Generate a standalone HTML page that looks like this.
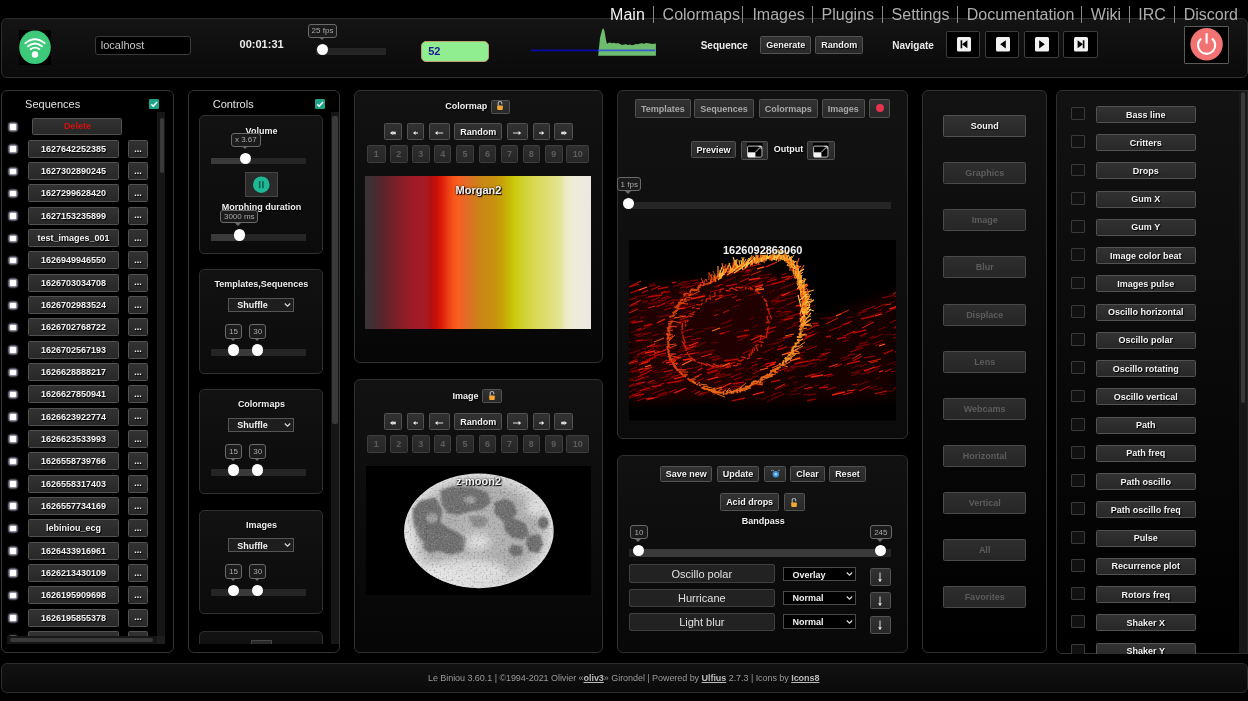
<!DOCTYPE html><html><head><meta charset="utf-8"><style>
*{margin:0;padding:0;box-sizing:border-box}
html,body{width:1248px;height:701px;background:#000;overflow:hidden;font-family:"Liberation Sans",sans-serif;color:#eee}
body{will-change:transform}
div,span{position:absolute}
.panel{border:1px solid #343434;border-radius:6px}
.btn{background:linear-gradient(#323232,#282828);border:1px solid #525252;border-radius:1.5px;color:#f2f2f2;font-weight:bold;font-size:9px;text-align:center;text-shadow:1px 1px 1px #000;white-space:nowrap;overflow:hidden}
.bt{text-align:center;white-space:nowrap;font-weight:bold;color:#f2f2f2;text-shadow:1px 1px 1px #000}
.bt.dis{color:#5c5c5c;text-shadow:none}
.bt.gry{color:#a8a8a8;text-shadow:none}
.tt{text-align:center;white-space:nowrap;font-size:8px;line-height:8px;color:#a8a8a8}
.dis{color:#6c6c6c;text-shadow:none}
.gry{color:#a8a8a8}
.tip{background:#1b1b1b;border:1px solid #6a6a6a;border-radius:3px;color:#a0a0a0;font-size:9px;text-align:center;white-space:nowrap}
.tip span{line-height:9px}
.tiparr{width:0;height:0;border-left:3.5px solid transparent;border-right:3.5px solid transparent;border-top:3.5px solid #6a6a6a}
.hdl{background:#fff;border-radius:50%}
.track{background:#252525}
.trackfill{background:#3a3a3a}
.card{border:1px solid #2f2f2f;border-radius:5px;background:linear-gradient(#121212,#0b0b0b)}
.sel{border:1px solid #555;background:#1e1e1e;color:#f0f0f0;font-weight:bold;white-space:nowrap}
.cbw{background:#fff;border-radius:1px;box-shadow:0 0 1.6px 1.6px #a4a4bc}
.cbd{background:#111;border:1px solid #3a3a3a;border-radius:1px}
</style></head><body>
<div class="panel" style="left:1px;top:17.5px;width:1247px;height:60px;background:linear-gradient(#141414,#0a0a0a);border-color:#2e2e2e;border-right-color:#2e2e2e;"></div>
<span style="left:610.1px;top:7px;font-size:16px;line-height:16px;font-weight:normal;color:#f2f2f2;white-space:nowrap;">Main</span>
<div class="" style="left:652.5px;top:6px;width:1px;height:17px;background:#8a8a8a;"></div>
<span style="left:662.6px;top:7px;font-size:16px;line-height:16px;font-weight:normal;color:#adadad;white-space:nowrap;">Colormaps</span>
<div class="" style="left:742.3px;top:6px;width:1px;height:17px;background:#8a8a8a;"></div>
<span style="left:752.4px;top:7px;font-size:16px;line-height:16px;font-weight:normal;color:#adadad;white-space:nowrap;">Images</span>
<div class="" style="left:812.3px;top:6px;width:1px;height:17px;background:#8a8a8a;"></div>
<span style="left:821.6px;top:7px;font-size:16px;line-height:16px;font-weight:normal;color:#adadad;white-space:nowrap;">Plugins</span>
<div class="" style="left:882.3px;top:6px;width:1px;height:17px;background:#8a8a8a;"></div>
<span style="left:891.6px;top:7px;font-size:16px;line-height:16px;font-weight:normal;color:#adadad;white-space:nowrap;">Settings</span>
<div class="" style="left:956.7px;top:6px;width:1px;height:17px;background:#8a8a8a;"></div>
<span style="left:966.7px;top:7px;font-size:16px;line-height:16px;font-weight:normal;color:#adadad;white-space:nowrap;">Documentation</span>
<div class="" style="left:1081.3px;top:6px;width:1px;height:17px;background:#8a8a8a;"></div>
<span style="left:1090.8px;top:7px;font-size:16px;line-height:16px;font-weight:normal;color:#adadad;white-space:nowrap;">Wiki</span>
<div class="" style="left:1128.7px;top:6px;width:1px;height:17px;background:#8a8a8a;"></div>
<span style="left:1138.2px;top:7px;font-size:16px;line-height:16px;font-weight:normal;color:#adadad;white-space:nowrap;">IRC</span>
<div class="" style="left:1174.2px;top:6px;width:1px;height:17px;background:#8a8a8a;"></div>
<span style="left:1183.7px;top:7px;font-size:16px;line-height:16px;font-weight:normal;color:#adadad;white-space:nowrap;">Discord</span>
<div class="" style="left:18.6px;top:30px;width:32.4px;height:34.6px;background:#000;"></div>
<svg style="position:absolute;left:18px;top:30px" width="34" height="35" viewBox="0 0 34 35">
<ellipse cx="17" cy="17.3" rx="15.8" ry="16.8" fill="#3dc97a"/>
<path d="M7.3 13.2 Q17 5.2 26.7 13.2" stroke="#fff" stroke-width="1.9" fill="none" stroke-linecap="round"/>
<path d="M10 16.3 Q17 10.8 24 16.3" stroke="#fff" stroke-width="1.9" fill="none" stroke-linecap="round"/>
<path d="M12.6 19.3 Q17 16 21.4 19.3" stroke="#fff" stroke-width="1.9" fill="none" stroke-linecap="round"/>
<circle cx="17" cy="24.5" r="3.2" fill="#fff"/>
</svg>
<div class="" style="left:94.5px;top:35.5px;width:96.5px;height:19px;background:#000;border:1px solid #3a3a3a;border-radius:3px;"></div>
<span style="left:100.8px;top:40px;font-size:11px;line-height:11px;font-weight:normal;color:#c8c8c8;white-space:nowrap;">localhost</span>
<span style="left:239.6px;top:39px;font-size:11px;line-height:11px;font-weight:bold;color:#ececec;white-space:nowrap;">00:01:31</span>
<div class="tip" style="left:308px;top:24px;width:29px;height:14px;"></div>
<span class="tt" style="left:308px;width:29px;top:27px;">25 fps</span>
<div class="tiparr" style="left:318.9px;top:37.4px;"></div>
<div class="track" style="left:316px;top:48px;width:70px;height:7px;"></div>
<div class="hdl" style="left:316.7px;top:43.6px;width:11.4px;height:11.4px;"></div>
<div class="" style="left:421px;top:41px;width:68px;height:21px;background:#90ee90;border:1px solid #c0a070;border-radius:5px;"></div>
<span style="left:428.2px;top:46px;font-size:11px;line-height:11px;font-weight:bold;color:#1a1a9c;white-space:nowrap;">52</span>
<svg style="position:absolute;left:520px;top:18px" width="160" height="60" viewBox="0 0 160 60">
<path d="M78.2 37.8 L80 20 L82 12 L83.3 10.2 L84.5 13 L86 22 L87 26 L88 25 L90 24.5 L92 25.2 L94 24.8 L96 25.5 L98 25 L100 26 L102 27 L104 26.5 L106 26.2 L108 27 L110 26.5 L112 27.2 L114 26.8 L116 26 L118 26.3 L120 25.5 L122 25.2 L124 25.8 L126 25 L128 25.2 L130 25.6 L132 26 L134 25.8 L135.9 25.4 L135.9 37.8 Z" fill="#6ebd6e"/>
<line x1="10.9" y1="32.4" x2="78.2" y2="32.4" stroke="#0a0ab0" stroke-width="1.6"/>
<line x1="78.2" y1="32.4" x2="135.3" y2="32.4" stroke="#3a5ad0" stroke-width="1.6"/>
</svg>
<span style="left:700.7px;top:41px;font-size:10px;line-height:10px;font-weight:bold;color:#eaeaea;white-space:nowrap;">Sequence</span>
<div class="btn " style="left:760.3px;top:36px;width:50.7px;height:17.8px;"></div>
<span class="bt " style="left:760.3px;width:50.7px;top:41px;font-size:9px;line-height:9px;">Generate</span>
<div class="btn " style="left:815.2px;top:36px;width:48.1px;height:17.8px;"></div>
<span class="bt " style="left:815.2px;width:48.1px;top:41px;font-size:9px;line-height:9px;">Random</span>
<span style="left:892.2px;top:41px;font-size:10px;line-height:10px;font-weight:bold;color:#eaeaea;white-space:nowrap;">Navigate</span>
<div class="" style="left:945.6px;top:31.4px;width:34.5px;height:26.3px;background:#000;border:1px solid #3c3c3c;border-radius:2px;"></div>
<svg style="position:absolute;left:956.5px;top:37.4px" width="14" height="15" viewBox="0 0 14 15"><rect x="0" y="0" width="14" height="14.5" rx="1.5" fill="#f2f2f2"/><rect x="3.6" y="3.3" width="1.6" height="8" fill="#000"/><path d="M10.4 3.3 L5 7.3 L10.4 11.3 Z" fill="#000"/></svg>
<div class="" style="left:984.9px;top:31.4px;width:34.5px;height:26.3px;background:#000;border:1px solid #3c3c3c;border-radius:2px;"></div>
<svg style="position:absolute;left:995.8px;top:37.4px" width="14" height="15" viewBox="0 0 14 15"><rect x="0" y="0" width="14" height="14.5" rx="1.5" fill="#f2f2f2"/><path d="M9.8 3.2 L4.2 7.3 L9.8 11.4 Z" fill="#000"/></svg>
<div class="" style="left:1024.1px;top:31.4px;width:34.5px;height:26.3px;background:#000;border:1px solid #3c3c3c;border-radius:2px;"></div>
<svg style="position:absolute;left:1035px;top:37.4px" width="14" height="15" viewBox="0 0 14 15"><rect x="0" y="0" width="14" height="14.5" rx="1.5" fill="#f2f2f2"/><path d="M4.2 3.2 L9.8 7.3 L4.2 11.4 Z" fill="#000"/></svg>
<div class="" style="left:1063.3px;top:31.4px;width:34.5px;height:26.3px;background:#000;border:1px solid #3c3c3c;border-radius:2px;"></div>
<svg style="position:absolute;left:1074.2px;top:37.4px" width="14" height="15" viewBox="0 0 14 15"><rect x="0" y="0" width="14" height="14.5" rx="1.5" fill="#f2f2f2"/><rect x="8.8" y="3.3" width="1.6" height="8" fill="#000"/><path d="M3.6 3.3 L9 7.3 L3.6 11.3 Z" fill="#000"/></svg>
<div class="" style="left:1183.5px;top:25.9px;width:45.5px;height:37.8px;background:#000;border:1px solid #5a5a5a;border-radius:1px;"></div>
<svg style="position:absolute;left:1188px;top:26px" width="38" height="38" viewBox="0 0 38 38">
<circle cx="18.6" cy="18.2" r="16.2" fill="#f37373"/>
<path d="M13.2 12.6 A8.6 8.6 0 1 0 24 12.6" stroke="#fff" stroke-width="2.1" fill="none" stroke-linecap="butt"/>
<line x1="18.6" y1="7.2" x2="18.6" y2="17.6" stroke="#fff" stroke-width="2.1"/>
</svg>
<div class="panel" style="left:1px;top:89.6px;width:173px;height:563.7px;background:#000;"></div>
<span style="left:25.1px;top:99px;font-size:11px;line-height:11px;font-weight:normal;color:#e2e2e2;white-space:nowrap;">Sequences</span>
<svg style="position:absolute;left:149.1px;top:98.7px" width="10" height="10" viewBox="0 0 10 10">
<rect x="0" y="0" width="10" height="10" rx="1.2" fill="#1da484"/>
<path d="M2.2 5.2 L4.2 7.2 L8 3" stroke="#fff" stroke-width="1.5" fill="none"/></svg>
<div style="left:6px;top:112px;width:150px;height:524px;overflow:hidden;"><div style="left:-6px;top:-112px;width:1248px;height:701px;">
<div class="cbw" style="left:10px;top:123.8px;width:5.8px;height:5.8px;"></div>
<div class="btn " style="left:32.3px;top:118px;width:90.2px;height:16.8px;"></div>
<span class="bt " style="left:32.3px;width:90.2px;top:122px;font-size:9px;line-height:9px;color:#d41010;text-shadow:none;">Delete</span>
<div class="cbw" style="left:10px;top:146.2px;width:5.6px;height:5.6px;"></div>
<div class="btn " style="left:28.3px;top:139.8px;width:90.4px;height:17.8px;"></div>
<span class="bt " style="left:28.3px;width:90.4px;top:145px;font-size:9px;line-height:9px;">1627642252385</span>
<div class="btn " style="left:128.2px;top:139.8px;width:19.7px;height:17.8px;"></div>
<span class="bt " style="left:128.2px;width:19.7px;top:145px;font-size:9px;line-height:9px;">...</span>
<div class="cbw" style="left:10px;top:168.53px;width:5.6px;height:5.6px;"></div>
<div class="btn " style="left:28.3px;top:162.13px;width:90.4px;height:17.8px;"></div>
<span class="bt " style="left:28.3px;width:90.4px;top:167px;font-size:9px;line-height:9px;">1627302890245</span>
<div class="btn " style="left:128.2px;top:162.13px;width:19.7px;height:17.8px;"></div>
<span class="bt " style="left:128.2px;width:19.7px;top:167px;font-size:9px;line-height:9px;">...</span>
<div class="cbw" style="left:10px;top:190.86px;width:5.6px;height:5.6px;"></div>
<div class="btn " style="left:28.3px;top:184.46px;width:90.4px;height:17.8px;"></div>
<span class="bt " style="left:28.3px;width:90.4px;top:189px;font-size:9px;line-height:9px;">1627299628420</span>
<div class="btn " style="left:128.2px;top:184.46px;width:19.7px;height:17.8px;"></div>
<span class="bt " style="left:128.2px;width:19.7px;top:189px;font-size:9px;line-height:9px;">...</span>
<div class="cbw" style="left:10px;top:213.19px;width:5.6px;height:5.6px;"></div>
<div class="btn " style="left:28.3px;top:206.79px;width:90.4px;height:17.8px;"></div>
<span class="bt " style="left:28.3px;width:90.4px;top:212px;font-size:9px;line-height:9px;">1627153235899</span>
<div class="btn " style="left:128.2px;top:206.79px;width:19.7px;height:17.8px;"></div>
<span class="bt " style="left:128.2px;width:19.7px;top:211px;font-size:9px;line-height:9px;">...</span>
<div class="cbw" style="left:10px;top:235.52px;width:5.6px;height:5.6px;"></div>
<div class="btn " style="left:28.3px;top:229.12px;width:90.4px;height:17.8px;"></div>
<span class="bt " style="left:28.3px;width:90.4px;top:234px;font-size:9px;line-height:9px;">test_images_001</span>
<div class="btn " style="left:128.2px;top:229.12px;width:19.7px;height:17.8px;"></div>
<span class="bt " style="left:128.2px;width:19.7px;top:234px;font-size:9px;line-height:9px;">...</span>
<div class="cbw" style="left:10px;top:257.85px;width:5.6px;height:5.6px;"></div>
<div class="btn " style="left:28.3px;top:251.45px;width:90.4px;height:17.8px;"></div>
<span class="bt " style="left:28.3px;width:90.4px;top:256px;font-size:9px;line-height:9px;">1626949946550</span>
<div class="btn " style="left:128.2px;top:251.45px;width:19.7px;height:17.8px;"></div>
<span class="bt " style="left:128.2px;width:19.7px;top:256px;font-size:9px;line-height:9px;">...</span>
<div class="cbw" style="left:10px;top:280.18px;width:5.6px;height:5.6px;"></div>
<div class="btn " style="left:28.3px;top:273.78px;width:90.4px;height:17.8px;"></div>
<span class="bt " style="left:28.3px;width:90.4px;top:279px;font-size:9px;line-height:9px;">1626703034708</span>
<div class="btn " style="left:128.2px;top:273.78px;width:19.7px;height:17.8px;"></div>
<span class="bt " style="left:128.2px;width:19.7px;top:278px;font-size:9px;line-height:9px;">...</span>
<div class="cbw" style="left:10px;top:302.51px;width:5.6px;height:5.6px;"></div>
<div class="btn " style="left:28.3px;top:296.11px;width:90.4px;height:17.8px;"></div>
<span class="bt " style="left:28.3px;width:90.4px;top:301px;font-size:9px;line-height:9px;">1626702983524</span>
<div class="btn " style="left:128.2px;top:296.11px;width:19.7px;height:17.8px;"></div>
<span class="bt " style="left:128.2px;width:19.7px;top:301px;font-size:9px;line-height:9px;">...</span>
<div class="cbw" style="left:10px;top:324.84px;width:5.6px;height:5.6px;"></div>
<div class="btn " style="left:28.3px;top:318.44px;width:90.4px;height:17.8px;"></div>
<span class="bt " style="left:28.3px;width:90.4px;top:323px;font-size:9px;line-height:9px;">1626702768722</span>
<div class="btn " style="left:128.2px;top:318.44px;width:19.7px;height:17.8px;"></div>
<span class="bt " style="left:128.2px;width:19.7px;top:323px;font-size:9px;line-height:9px;">...</span>
<div class="cbw" style="left:10px;top:347.17px;width:5.6px;height:5.6px;"></div>
<div class="btn " style="left:28.3px;top:340.77px;width:90.4px;height:17.8px;"></div>
<span class="bt " style="left:28.3px;width:90.4px;top:346px;font-size:9px;line-height:9px;">1626702567193</span>
<div class="btn " style="left:128.2px;top:340.77px;width:19.7px;height:17.8px;"></div>
<span class="bt " style="left:128.2px;width:19.7px;top:345px;font-size:9px;line-height:9px;">...</span>
<div class="cbw" style="left:10px;top:369.5px;width:5.6px;height:5.6px;"></div>
<div class="btn " style="left:28.3px;top:363.1px;width:90.4px;height:17.8px;"></div>
<span class="bt " style="left:28.3px;width:90.4px;top:368px;font-size:9px;line-height:9px;">1626628888217</span>
<div class="btn " style="left:128.2px;top:363.1px;width:19.7px;height:17.8px;"></div>
<span class="bt " style="left:128.2px;width:19.7px;top:368px;font-size:9px;line-height:9px;">...</span>
<div class="cbw" style="left:10px;top:391.83px;width:5.6px;height:5.6px;"></div>
<div class="btn " style="left:28.3px;top:385.43px;width:90.4px;height:17.8px;"></div>
<span class="bt " style="left:28.3px;width:90.4px;top:390px;font-size:9px;line-height:9px;">1626627850941</span>
<div class="btn " style="left:128.2px;top:385.43px;width:19.7px;height:17.8px;"></div>
<span class="bt " style="left:128.2px;width:19.7px;top:390px;font-size:9px;line-height:9px;">...</span>
<div class="cbw" style="left:10px;top:414.16px;width:5.6px;height:5.6px;"></div>
<div class="btn " style="left:28.3px;top:407.76px;width:90.4px;height:17.8px;"></div>
<span class="bt " style="left:28.3px;width:90.4px;top:413px;font-size:9px;line-height:9px;">1626623922774</span>
<div class="btn " style="left:128.2px;top:407.76px;width:19.7px;height:17.8px;"></div>
<span class="bt " style="left:128.2px;width:19.7px;top:412px;font-size:9px;line-height:9px;">...</span>
<div class="cbw" style="left:10px;top:436.49px;width:5.6px;height:5.6px;"></div>
<div class="btn " style="left:28.3px;top:430.09px;width:90.4px;height:17.8px;"></div>
<span class="bt " style="left:28.3px;width:90.4px;top:435px;font-size:9px;line-height:9px;">1626623533993</span>
<div class="btn " style="left:128.2px;top:430.09px;width:19.7px;height:17.8px;"></div>
<span class="bt " style="left:128.2px;width:19.7px;top:435px;font-size:9px;line-height:9px;">...</span>
<div class="cbw" style="left:10px;top:458.82px;width:5.6px;height:5.6px;"></div>
<div class="btn " style="left:28.3px;top:452.42px;width:90.4px;height:17.8px;"></div>
<span class="bt " style="left:28.3px;width:90.4px;top:457px;font-size:9px;line-height:9px;">1626558739766</span>
<div class="btn " style="left:128.2px;top:452.42px;width:19.7px;height:17.8px;"></div>
<span class="bt " style="left:128.2px;width:19.7px;top:457px;font-size:9px;line-height:9px;">...</span>
<div class="cbw" style="left:10px;top:481.15px;width:5.6px;height:5.6px;"></div>
<div class="btn " style="left:28.3px;top:474.75px;width:90.4px;height:17.8px;"></div>
<span class="bt " style="left:28.3px;width:90.4px;top:480px;font-size:9px;line-height:9px;">1626558317403</span>
<div class="btn " style="left:128.2px;top:474.75px;width:19.7px;height:17.8px;"></div>
<span class="bt " style="left:128.2px;width:19.7px;top:479px;font-size:9px;line-height:9px;">...</span>
<div class="cbw" style="left:10px;top:503.48px;width:5.6px;height:5.6px;"></div>
<div class="btn " style="left:28.3px;top:497.08px;width:90.4px;height:17.8px;"></div>
<span class="bt " style="left:28.3px;width:90.4px;top:502px;font-size:9px;line-height:9px;">1626557734169</span>
<div class="btn " style="left:128.2px;top:497.08px;width:19.7px;height:17.8px;"></div>
<span class="bt " style="left:128.2px;width:19.7px;top:502px;font-size:9px;line-height:9px;">...</span>
<div class="cbw" style="left:10px;top:525.81px;width:5.6px;height:5.6px;"></div>
<div class="btn " style="left:28.3px;top:519.41px;width:90.4px;height:17.8px;"></div>
<span class="bt " style="left:28.3px;width:90.4px;top:524px;font-size:9px;line-height:9px;">lebiniou_ecg</span>
<div class="btn " style="left:128.2px;top:519.41px;width:19.7px;height:17.8px;"></div>
<span class="bt " style="left:128.2px;width:19.7px;top:524px;font-size:9px;line-height:9px;">...</span>
<div class="cbw" style="left:10px;top:548.14px;width:5.6px;height:5.6px;"></div>
<div class="btn " style="left:28.3px;top:541.74px;width:90.4px;height:17.8px;"></div>
<span class="bt " style="left:28.3px;width:90.4px;top:547px;font-size:9px;line-height:9px;">1626433916961</span>
<div class="btn " style="left:128.2px;top:541.74px;width:19.7px;height:17.8px;"></div>
<span class="bt " style="left:128.2px;width:19.7px;top:546px;font-size:9px;line-height:9px;">...</span>
<div class="cbw" style="left:10px;top:570.47px;width:5.6px;height:5.6px;"></div>
<div class="btn " style="left:28.3px;top:564.07px;width:90.4px;height:17.8px;"></div>
<span class="bt " style="left:28.3px;width:90.4px;top:569px;font-size:9px;line-height:9px;">1626213430109</span>
<div class="btn " style="left:128.2px;top:564.07px;width:19.7px;height:17.8px;"></div>
<span class="bt " style="left:128.2px;width:19.7px;top:569px;font-size:9px;line-height:9px;">...</span>
<div class="cbw" style="left:10px;top:592.8px;width:5.6px;height:5.6px;"></div>
<div class="btn " style="left:28.3px;top:586.4px;width:90.4px;height:17.8px;"></div>
<span class="bt " style="left:28.3px;width:90.4px;top:591px;font-size:9px;line-height:9px;">1626195909698</span>
<div class="btn " style="left:128.2px;top:586.4px;width:19.7px;height:17.8px;"></div>
<span class="bt " style="left:128.2px;width:19.7px;top:591px;font-size:9px;line-height:9px;">...</span>
<div class="cbw" style="left:10px;top:615.13px;width:5.6px;height:5.6px;"></div>
<div class="btn " style="left:28.3px;top:608.73px;width:90.4px;height:17.8px;"></div>
<span class="bt " style="left:28.3px;width:90.4px;top:614px;font-size:9px;line-height:9px;">1626195855378</span>
<div class="btn " style="left:128.2px;top:608.73px;width:19.7px;height:17.8px;"></div>
<span class="bt " style="left:128.2px;width:19.7px;top:613px;font-size:9px;line-height:9px;">...</span>
<div class="cbw" style="left:10px;top:637.46px;width:5.6px;height:5.6px;"></div>
<div class="btn " style="left:28.3px;top:631.06px;width:90.4px;height:17.8px;"></div>
<div class="btn " style="left:128.2px;top:631.06px;width:19.7px;height:17.8px;"></div>
<span class="bt " style="left:128.2px;width:19.7px;top:636px;font-size:9px;line-height:9px;">...</span>
</div></div>
<div class="" style="left:157.3px;top:112px;width:8.2px;height:532px;background:#161616;"></div>
<div class="" style="left:159.8px;top:118px;width:4.3px;height:55px;background:#3a3a3a;border-radius:2px;"></div>
<div class="" style="left:7.2px;top:636.1px;width:150.1px;height:7.9px;background:#161616;"></div>
<div class="" style="left:10px;top:638.2px;width:142.7px;height:3.9px;background:#3a3a3a;border-radius:2px;"></div>
<div class="" style="left:157.3px;top:636.1px;width:8.2px;height:7.9px;background:#1e1e1e;"></div>
<div class="panel" style="left:187.7px;top:89.9px;width:152.3px;height:563.4px;background:#000;"></div>
<span style="left:212.7px;top:99px;font-size:11px;line-height:11px;font-weight:normal;color:#e2e2e2;white-space:nowrap;">Controls</span>
<svg style="position:absolute;left:315px;top:98.9px" width="10" height="10" viewBox="0 0 10 10">
<rect x="0" y="0" width="10" height="10" rx="1.2" fill="#1da484"/>
<path d="M2.2 5.2 L4.2 7.2 L8 3" stroke="#fff" stroke-width="1.5" fill="none"/></svg>
<div class="" style="left:330.5px;top:112px;width:8.5px;height:532px;background:#161616;"></div>
<div class="" style="left:332px;top:116px;width:5.5px;height:308px;background:#3a3a3a;border-radius:2px;"></div>
<div style="left:195px;top:112px;width:135px;height:532px;overflow:hidden;">
<div style="left:-195px;top:-112px;width:1248px;height:701px;">
<div class="card" style="left:199.3px;top:115.4px;width:124px;height:138.7px;"></div>
<span style="left:201.5px;top:127px;width:120px;text-align:center;font-size:9px;line-height:9px;font-weight:bold;color:#eeeeee;white-space:nowrap;text-shadow:1px 1px 1px #000;">Volume</span>
<div class="track" style="left:210.8px;top:157.9px;width:95.3px;height:6.5px;"></div>
<div class="trackfill" style="left:210.8px;top:157.9px;width:34.9px;height:6.5px;"></div>
<div class="tip" style="left:231.1px;top:132.5px;width:29.5px;height:14.1px;"></div>
<span class="tt" style="left:231.1px;width:29.5px;top:136px;">x 3.67</span>
<div class="tiparr" style="left:242.2px;top:146px;"></div>
<div class="hdl" style="left:240px;top:153.1px;width:11.4px;height:11.4px;"></div>
<div class="" style="left:245.3px;top:172.4px;width:32.4px;height:25.1px;background:#2a2a2a;border:1px solid #474747;"></div>
<svg style="position:absolute;left:252px;top:176px" width="19" height="18" viewBox="0 0 19 18">
<circle cx="9.3" cy="8.7" r="8.3" fill="#1fb894"/>
<rect x="6.9" y="5.2" width="1.5" height="7" fill="#0b5a48"/><rect x="10.2" y="5.2" width="1.5" height="7" fill="#0b5a48"/></svg>
<span style="left:201.5px;top:203px;width:120px;text-align:center;font-size:9px;line-height:9px;font-weight:bold;color:#eeeeee;white-space:nowrap;text-shadow:1px 1px 1px #000;">Morphing duration</span>
<div class="track" style="left:211.1px;top:233.7px;width:94.7px;height:6.9px;"></div>
<div class="trackfill" style="left:211.1px;top:233.7px;width:28.1px;height:6.9px;"></div>
<div class="tip" style="left:220.2px;top:209.9px;width:38.2px;height:13.6px;"></div>
<span class="tt" style="left:220.2px;width:38.2px;top:213px;">3000 ms</span>
<div class="tiparr" style="left:235.4px;top:222.9px;"></div>
<div class="hdl" style="left:233.5px;top:229.2px;width:11.4px;height:11.4px;"></div>
<div class="card" style="left:199.3px;top:269.3px;width:124px;height:104.7px;"></div>
<span style="left:201.4px;top:280px;width:120px;text-align:center;font-size:9px;line-height:9px;font-weight:bold;color:#eeeeee;white-space:nowrap;text-shadow:1px 1px 1px #000;">Templates,Sequences</span>
<div class="sel" style="left:228.4px;top:298px;width:65.4px;height:13.9px;"><svg style="position:absolute;left:54.5px;top:3px" width="7" height="6" viewBox="0 0 7 6"><path d="M0.8 1.5 L3.5 4.2 L6.2 1.5" stroke="#ddd" stroke-width="1.2" fill="none"/></svg></div>
<span style="left:237.3px;top:301px;font-size:9px;line-height:9px;font-weight:bold;color:#f0f0f0;white-space:nowrap;">Shuffle</span>
<div class="track" style="left:211.3px;top:348.6px;width:94.6px;height:7.3px;"></div>
<div class="trackfill" style="left:233.2px;top:348.6px;width:24.1px;height:7.3px;"></div>
<div class="tip" style="left:225.2px;top:324px;width:16.7px;height:14.6px;"></div>
<span class="tt" style="left:225.2px;width:16.7px;top:328px;">15</span>
<div class="tiparr" style="left:229.9px;top:338px;"></div>
<div class="tip" style="left:249.3px;top:324px;width:16.7px;height:14.6px;"></div>
<span class="tt" style="left:249.3px;width:16.7px;top:328px;">30</span>
<div class="tiparr" style="left:254px;top:338px;"></div>
<div class="hdl" style="left:227.5px;top:344.2px;width:11.4px;height:11.4px;"></div>
<div class="hdl" style="left:251.6px;top:344.2px;width:11.4px;height:11.4px;"></div>
<div class="card" style="left:199.3px;top:389.4px;width:124px;height:104.7px;"></div>
<span style="left:201.4px;top:400px;width:120px;text-align:center;font-size:9px;line-height:9px;font-weight:bold;color:#eeeeee;white-space:nowrap;text-shadow:1px 1px 1px #000;">Colormaps</span>
<div class="sel" style="left:228.4px;top:418.1px;width:65.4px;height:13.9px;"><svg style="position:absolute;left:54.5px;top:3px" width="7" height="6" viewBox="0 0 7 6"><path d="M0.8 1.5 L3.5 4.2 L6.2 1.5" stroke="#ddd" stroke-width="1.2" fill="none"/></svg></div>
<span style="left:237.3px;top:421px;font-size:9px;line-height:9px;font-weight:bold;color:#f0f0f0;white-space:nowrap;">Shuffle</span>
<div class="track" style="left:211.3px;top:468.7px;width:94.6px;height:7.3px;"></div>
<div class="trackfill" style="left:233.2px;top:468.7px;width:24.1px;height:7.3px;"></div>
<div class="tip" style="left:225.2px;top:444.1px;width:16.7px;height:14.6px;"></div>
<span class="tt" style="left:225.2px;width:16.7px;top:448px;">15</span>
<div class="tiparr" style="left:229.9px;top:458.1px;"></div>
<div class="tip" style="left:249.3px;top:444.1px;width:16.7px;height:14.6px;"></div>
<span class="tt" style="left:249.3px;width:16.7px;top:448px;">30</span>
<div class="tiparr" style="left:254px;top:458.1px;"></div>
<div class="hdl" style="left:227.5px;top:464.3px;width:11.4px;height:11.4px;"></div>
<div class="hdl" style="left:251.6px;top:464.3px;width:11.4px;height:11.4px;"></div>
<div class="card" style="left:199.3px;top:509.6px;width:124px;height:104.7px;"></div>
<span style="left:201.4px;top:521px;width:120px;text-align:center;font-size:9px;line-height:9px;font-weight:bold;color:#eeeeee;white-space:nowrap;text-shadow:1px 1px 1px #000;">Images</span>
<div class="sel" style="left:228.4px;top:538.3px;width:65.4px;height:13.9px;"><svg style="position:absolute;left:54.5px;top:3px" width="7" height="6" viewBox="0 0 7 6"><path d="M0.8 1.5 L3.5 4.2 L6.2 1.5" stroke="#ddd" stroke-width="1.2" fill="none"/></svg></div>
<span style="left:237.3px;top:542px;font-size:9px;line-height:9px;font-weight:bold;color:#f0f0f0;white-space:nowrap;">Shuffle</span>
<div class="track" style="left:211.3px;top:588.9px;width:94.6px;height:7.3px;"></div>
<div class="trackfill" style="left:233.2px;top:588.9px;width:24.1px;height:7.3px;"></div>
<div class="tip" style="left:225.2px;top:564.3px;width:16.7px;height:14.6px;"></div>
<span class="tt" style="left:225.2px;width:16.7px;top:568px;">15</span>
<div class="tiparr" style="left:229.9px;top:578.3px;"></div>
<div class="tip" style="left:249.3px;top:564.3px;width:16.7px;height:14.6px;"></div>
<span class="tt" style="left:249.3px;width:16.7px;top:568px;">30</span>
<div class="tiparr" style="left:254px;top:578.3px;"></div>
<div class="hdl" style="left:227.5px;top:584.5px;width:11.4px;height:11.4px;"></div>
<div class="hdl" style="left:251.6px;top:584.5px;width:11.4px;height:11.4px;"></div>
<div class="card" style="left:199.3px;top:630.6px;width:124px;height:69.4px;"></div>
<div class="" style="left:250.5px;top:640.4px;width:21.7px;height:19.6px;background:#2a2a2a;border:1px solid #474747;"></div>
</div></div>
<div class="panel" style="left:354.2px;top:89.5px;width:248.8px;height:273.8px;background:linear-gradient(#121212,#060606);border-color:#303030;"></div>
<span style="left:445.2px;top:102px;font-size:9px;line-height:9px;font-weight:bold;color:#f0f0f0;white-space:nowrap;text-shadow:1px 1px 1px #000;">Colormap</span>
<div class="btn" style="left:490.7px;top:99.5px;width:19px;height:14.3px;"></div>
<svg style="position:absolute;left:496.2px;top:100.4px" width="8" height="10" viewBox="0 0 8 10">
<path d="M2.2 5.8 V3.3 A1.8 1.8 0 0 1 5.8 3.3 V4.2" stroke="#a9b0b8" stroke-width="1.2" fill="none"/>
<rect x="1.2" y="5.5" width="5.6" height="4.4" rx="0.8" fill="#f8a830"/></svg>
<div class="btn " style="left:384px;top:123.4px;width:18px;height:17px;"></div>
<svg style="position:absolute;left:390px;top:131.4px" width="6" height="4" viewBox="0 0 6 4"><g><path d="M0 2 L2.6 0 L2.6 4 Z" fill="#eee"/><rect x="2.4" y="0.7" width="3.4" height="2.6" fill="#ddd"/></g></svg>
<div class="btn " style="left:406.5px;top:123.4px;width:17.3px;height:17px;"></div>
<svg style="position:absolute;left:412.6px;top:131.4px" width="5.2" height="4" viewBox="0 0 5.2 4"><g><path d="M0 2 L2.6 0 L2.6 4 Z" fill="#eee"/><rect x="2.4" y="1.4" width="2.8" height="1.2" fill="#ddd"/></g></svg>
<div class="btn " style="left:428.6px;top:123.4px;width:21.8px;height:17px;"></div>
<svg style="position:absolute;left:435.4px;top:131.4px" width="8.2" height="4" viewBox="0 0 8.2 4"><g><path d="M0 2 L2.6 0 L2.6 4 Z" fill="#eee"/><rect x="2.4" y="1.5" width="5.8" height="1" fill="#ddd"/></g></svg>
<div class="btn " style="left:454.2px;top:123.4px;width:48.2px;height:17px;"></div>
<span class="bt " style="left:454.2px;width:48.2px;top:128px;font-size:9px;line-height:9px;">Random</span>
<div class="btn " style="left:507px;top:123.4px;width:20.9px;height:17px;"></div>
<svg style="position:absolute;left:513.4px;top:131.4px" width="8.2" height="4" viewBox="0 0 8.2 4"><g transform="translate(8.2,0) scale(-1,1)"><path d="M0 2 L2.6 0 L2.6 4 Z" fill="#eee"/><rect x="2.4" y="1.5" width="5.8" height="1" fill="#ddd"/></g></svg>
<div class="btn " style="left:532.9px;top:123.4px;width:17px;height:17px;"></div>
<svg style="position:absolute;left:538.8px;top:131.4px" width="5.2" height="4" viewBox="0 0 5.2 4"><g transform="translate(5.2,0) scale(-1,1)"><path d="M0 2 L2.6 0 L2.6 4 Z" fill="#eee"/><rect x="2.4" y="1.4" width="2.8" height="1.2" fill="#ddd"/></g></svg>
<div class="btn " style="left:554.4px;top:123.4px;width:18.4px;height:17px;"></div>
<svg style="position:absolute;left:560.6px;top:131.4px" width="6" height="4" viewBox="0 0 6 4"><g transform="translate(6,0) scale(-1,1)"><path d="M0 2 L2.6 0 L2.6 4 Z" fill="#eee"/><rect x="2.4" y="0.7" width="3.4" height="2.6" fill="#ddd"/></g></svg>
<div class="btn dis" style="left:367px;top:145.2px;width:18.7px;height:18px;background:linear-gradient(#2e2e2e,#262626);border-color:#3e3e3e;"></div>
<span class="bt dis" style="left:367px;width:18.7px;top:150px;font-size:9px;line-height:9px;">1</span>
<div class="btn dis" style="left:390px;top:145.2px;width:17.5px;height:18px;background:linear-gradient(#2e2e2e,#262626);border-color:#3e3e3e;"></div>
<span class="bt dis" style="left:390px;width:17.5px;top:150px;font-size:9px;line-height:9px;">2</span>
<div class="btn dis" style="left:412px;top:145.2px;width:17.6px;height:18px;background:linear-gradient(#2e2e2e,#262626);border-color:#3e3e3e;"></div>
<span class="bt dis" style="left:412px;width:17.6px;top:150px;font-size:9px;line-height:9px;">3</span>
<div class="btn dis" style="left:434px;top:145.2px;width:17.4px;height:18px;background:linear-gradient(#2e2e2e,#262626);border-color:#3e3e3e;"></div>
<span class="bt dis" style="left:434px;width:17.4px;top:150px;font-size:9px;line-height:9px;">4</span>
<div class="btn dis" style="left:456px;top:145.2px;width:17.8px;height:18px;background:linear-gradient(#2e2e2e,#262626);border-color:#3e3e3e;"></div>
<span class="bt dis" style="left:456px;width:17.8px;top:150px;font-size:9px;line-height:9px;">5</span>
<div class="btn dis" style="left:479.1px;top:145.2px;width:16.8px;height:18px;background:linear-gradient(#2e2e2e,#262626);border-color:#3e3e3e;"></div>
<span class="bt dis" style="left:479.1px;width:16.8px;top:150px;font-size:9px;line-height:9px;">6</span>
<div class="btn dis" style="left:501px;top:145.2px;width:16.9px;height:18px;background:linear-gradient(#2e2e2e,#262626);border-color:#3e3e3e;"></div>
<span class="bt dis" style="left:501px;width:16.9px;top:150px;font-size:9px;line-height:9px;">7</span>
<div class="btn dis" style="left:522.8px;top:145.2px;width:17px;height:18px;background:linear-gradient(#2e2e2e,#262626);border-color:#3e3e3e;"></div>
<span class="bt dis" style="left:522.8px;width:17px;top:150px;font-size:9px;line-height:9px;">8</span>
<div class="btn dis" style="left:544.6px;top:145.2px;width:18.3px;height:18px;background:linear-gradient(#2e2e2e,#262626);border-color:#3e3e3e;"></div>
<span class="bt dis" style="left:544.6px;width:18.3px;top:150px;font-size:9px;line-height:9px;">9</span>
<div class="btn dis" style="left:566.4px;top:145.2px;width:22.8px;height:18px;background:linear-gradient(#2e2e2e,#262626);border-color:#3e3e3e;"></div>
<span class="bt dis" style="left:566.4px;width:22.8px;top:150px;font-size:9px;line-height:9px;">10</span>
<div style="left:365.2px;top:175.8px;width:225.8px;height:153.6px;background:linear-gradient(to right,
#3a3438 0%,#3c3236 2%,#4a2a30 5%,#5a2429 8%,#6c2228 11%,#7c2028 14%,#8c1e28 17%,#9a1c28 20%,#a41b26 24%,#a81a24 27%,#b01010 29.2%,#c81008 31.5%,#dc1c0c 34%,#ec3a14 36.5%,#f45418 39%,#f86020 41.2%,#e86828 44%,#d87420 47%,#cc8018 50%,#c88a14 53%,#c89010 57%,#c8a408 61%,#c8c008 64.5%,#cccc10 66.5%,#d0d030 70%,#d8d850 74.5%,#dcdc68 79%,#e0e080 83%,#e4e498 86.5%,#ecebc8 89%,#eeecd8 92%,#ece8e2 100%);"></div>
<span style="left:418.5px;top:185px;width:120px;text-align:center;font-size:11px;line-height:11px;font-weight:bold;color:#f4f4f4;white-space:nowrap;text-shadow:0 0 2px #000,1px 1px 1px #000;">Morgan2</span>
<div class="panel" style="left:354.2px;top:379.2px;width:248.8px;height:274.1px;background:linear-gradient(#121212,#060606);border-color:#303030;"></div>
<span style="left:452.5px;top:392px;font-size:9px;line-height:9px;font-weight:bold;color:#f0f0f0;white-space:nowrap;text-shadow:1px 1px 1px #000;">Image</span>
<div class="btn" style="left:482.3px;top:389.2px;width:20.2px;height:14.3px;"></div>
<svg style="position:absolute;left:488.4px;top:390.1px" width="8" height="10" viewBox="0 0 8 10">
<path d="M2.2 5.8 V3.3 A1.8 1.8 0 0 1 5.8 3.3 V4.2" stroke="#a9b0b8" stroke-width="1.2" fill="none"/>
<rect x="1.2" y="5.5" width="5.6" height="4.4" rx="0.8" fill="#f8a830"/></svg>
<div class="btn " style="left:384px;top:413.1px;width:18px;height:17px;"></div>
<svg style="position:absolute;left:390px;top:421.1px" width="6" height="4" viewBox="0 0 6 4"><g><path d="M0 2 L2.6 0 L2.6 4 Z" fill="#eee"/><rect x="2.4" y="0.7" width="3.4" height="2.6" fill="#ddd"/></g></svg>
<div class="btn " style="left:406.5px;top:413.1px;width:17.3px;height:17px;"></div>
<svg style="position:absolute;left:412.6px;top:421.1px" width="5.2" height="4" viewBox="0 0 5.2 4"><g><path d="M0 2 L2.6 0 L2.6 4 Z" fill="#eee"/><rect x="2.4" y="1.4" width="2.8" height="1.2" fill="#ddd"/></g></svg>
<div class="btn " style="left:428.6px;top:413.1px;width:21.8px;height:17px;"></div>
<svg style="position:absolute;left:435.4px;top:421.1px" width="8.2" height="4" viewBox="0 0 8.2 4"><g><path d="M0 2 L2.6 0 L2.6 4 Z" fill="#eee"/><rect x="2.4" y="1.5" width="5.8" height="1" fill="#ddd"/></g></svg>
<div class="btn " style="left:454.2px;top:413.1px;width:48.2px;height:17px;"></div>
<span class="bt " style="left:454.2px;width:48.2px;top:418px;font-size:9px;line-height:9px;">Random</span>
<div class="btn " style="left:507px;top:413.1px;width:20.9px;height:17px;"></div>
<svg style="position:absolute;left:513.4px;top:421.1px" width="8.2" height="4" viewBox="0 0 8.2 4"><g transform="translate(8.2,0) scale(-1,1)"><path d="M0 2 L2.6 0 L2.6 4 Z" fill="#eee"/><rect x="2.4" y="1.5" width="5.8" height="1" fill="#ddd"/></g></svg>
<div class="btn " style="left:532.9px;top:413.1px;width:17px;height:17px;"></div>
<svg style="position:absolute;left:538.8px;top:421.1px" width="5.2" height="4" viewBox="0 0 5.2 4"><g transform="translate(5.2,0) scale(-1,1)"><path d="M0 2 L2.6 0 L2.6 4 Z" fill="#eee"/><rect x="2.4" y="1.4" width="2.8" height="1.2" fill="#ddd"/></g></svg>
<div class="btn " style="left:554.4px;top:413.1px;width:18.4px;height:17px;"></div>
<svg style="position:absolute;left:560.6px;top:421.1px" width="6" height="4" viewBox="0 0 6 4"><g transform="translate(6,0) scale(-1,1)"><path d="M0 2 L2.6 0 L2.6 4 Z" fill="#eee"/><rect x="2.4" y="0.7" width="3.4" height="2.6" fill="#ddd"/></g></svg>
<div class="btn dis" style="left:367px;top:434.9px;width:18.7px;height:18px;background:linear-gradient(#2e2e2e,#262626);border-color:#3e3e3e;"></div>
<span class="bt dis" style="left:367px;width:18.7px;top:440px;font-size:9px;line-height:9px;">1</span>
<div class="btn dis" style="left:390px;top:434.9px;width:17.5px;height:18px;background:linear-gradient(#2e2e2e,#262626);border-color:#3e3e3e;"></div>
<span class="bt dis" style="left:390px;width:17.5px;top:440px;font-size:9px;line-height:9px;">2</span>
<div class="btn dis" style="left:412px;top:434.9px;width:17.6px;height:18px;background:linear-gradient(#2e2e2e,#262626);border-color:#3e3e3e;"></div>
<span class="bt dis" style="left:412px;width:17.6px;top:440px;font-size:9px;line-height:9px;">3</span>
<div class="btn dis" style="left:434px;top:434.9px;width:17.4px;height:18px;background:linear-gradient(#2e2e2e,#262626);border-color:#3e3e3e;"></div>
<span class="bt dis" style="left:434px;width:17.4px;top:440px;font-size:9px;line-height:9px;">4</span>
<div class="btn dis" style="left:456px;top:434.9px;width:17.8px;height:18px;background:linear-gradient(#2e2e2e,#262626);border-color:#3e3e3e;"></div>
<span class="bt dis" style="left:456px;width:17.8px;top:440px;font-size:9px;line-height:9px;">5</span>
<div class="btn dis" style="left:479.1px;top:434.9px;width:16.8px;height:18px;background:linear-gradient(#2e2e2e,#262626);border-color:#3e3e3e;"></div>
<span class="bt dis" style="left:479.1px;width:16.8px;top:440px;font-size:9px;line-height:9px;">6</span>
<div class="btn dis" style="left:501px;top:434.9px;width:16.9px;height:18px;background:linear-gradient(#2e2e2e,#262626);border-color:#3e3e3e;"></div>
<span class="bt dis" style="left:501px;width:16.9px;top:440px;font-size:9px;line-height:9px;">7</span>
<div class="btn dis" style="left:522.8px;top:434.9px;width:17px;height:18px;background:linear-gradient(#2e2e2e,#262626);border-color:#3e3e3e;"></div>
<span class="bt dis" style="left:522.8px;width:17px;top:440px;font-size:9px;line-height:9px;">8</span>
<div class="btn dis" style="left:544.6px;top:434.9px;width:18.3px;height:18px;background:linear-gradient(#2e2e2e,#262626);border-color:#3e3e3e;"></div>
<span class="bt dis" style="left:544.6px;width:18.3px;top:440px;font-size:9px;line-height:9px;">9</span>
<div class="btn dis" style="left:566.4px;top:434.9px;width:22.8px;height:18px;background:linear-gradient(#2e2e2e,#262626);border-color:#3e3e3e;"></div>
<span class="bt dis" style="left:566.4px;width:22.8px;top:440px;font-size:9px;line-height:9px;">10</span>
<div class="" style="left:365.6px;top:466.25px;width:225.4px;height:128.55px;background:#000;"></div>
<svg style="position:absolute;left:365.6px;top:466.25px" width="225.4" height="128.5" viewBox="0 0 225.4 128.5">
<defs>
<radialGradient id="mg" cx="0.5" cy="0.5" r="0.5">
<stop offset="0" stop-color="#b4b4b4"/><stop offset="0.75" stop-color="#acacac"/><stop offset="0.93" stop-color="#cfcfcf"/><stop offset="1" stop-color="#e0e0e0"/>
</radialGradient>
<filter id="mb" x="-20%" y="-20%" width="140%" height="140%"><feGaussianBlur stdDeviation="1.3"/></filter>
<filter id="mb2" x="-20%" y="-20%" width="140%" height="140%"><feGaussianBlur stdDeviation="4"/></filter>
<filter id="mtx" x="0" y="0" width="100%" height="100%">
<feTurbulence type="fractalNoise" baseFrequency="0.7" numOctaves="1" seed="3" result="n"/>
<feColorMatrix in="n" type="matrix" values="0 0 0 0 1  0 0 0 0 1  0 0 0 0 1  1.6 1.6 1.6 0 -2.3"/>
</filter>
<filter id="mtx2" x="0" y="0" width="100%" height="100%">
<feTurbulence type="fractalNoise" baseFrequency="0.5" numOctaves="1" seed="9" result="n"/>
<feColorMatrix in="n" type="matrix" values="0 0 0 0 0  0 0 0 0 0  0 0 0 0 0  1.6 1.6 1.6 0 -2.4"/>
</filter>
<clipPath id="mc"><ellipse cx="112.9" cy="64.9" rx="74.8" ry="57.3"/></clipPath>
</defs>
<ellipse cx="112.9" cy="64.9" rx="74.8" ry="57.3" fill="url(#mg)"/>
<g clip-path="url(#mc)">
<g filter="url(#mb)" fill="#6e6e6e">
<path d="M46.6 43.8 L53.6 35.1 L69.2 31.6 L76.2 43.8 L74.4 56 L81.4 61.2 L91.9 66.4 L100.6 73.4 L97.1 85.6 L84.9 89.1 L74.4 85.6 L60.5 83.8 L58.8 76.9 L51.8 69.9 L47.5 59.5 Z"/>
<path d="M74.4 24.6 L86.6 20.3 L107.5 21.2 L121.5 26.4 L124.9 36.8 L116.2 43.8 L104 45.5 L91.9 49 L81.4 47.3 L76.2 38.6 Z"/>
<path d="M128.4 36.8 L138.9 32.5 L147.6 36.8 L151.1 47.3 L145.8 54.2 L135.4 54.2 L128.4 47.3 Z"/>
<path d="M137.1 54.2 L149.3 52.5 L159.7 57.7 L163.2 68.2 L156.3 73.4 L145.8 71.6 L138.9 64.7 Z"/>
<ellipse cx="177.2" cy="56.9" rx="5.4" ry="6.3"/>
<path d="M161.5 69.9 L173.7 68.2 L177.2 78.6 L172 87.3 L163.2 85.6 L159.7 76.9 Z"/>
<path d="M145.8 78.6 L156.3 80.4 L156.3 89.1 L147.6 90.8 L142.3 85.6 Z"/>
<path d="M58.8 75.1 L69.2 75.1 L72.7 83.8 L64 87.3 L57 82.1 Z"/>
</g>
<g filter="url(#mb)" fill="#8a8a8a">
<path d="M102.3 50.8 L114.5 49 L123.2 54.2 L118 61.2 L107.5 61.2 Z"/>
</g>
<g filter="url(#mb)" fill="#a8a8a8" opacity="0.8">
<ellipse cx="66" cy="52" rx="6" ry="5"/><ellipse cx="86" cy="55" rx="5" ry="4"/><ellipse cx="104" cy="34" rx="6" ry="4"/>
</g>
<g filter="url(#mb2)" fill="#ececec" opacity="0.8">
<ellipse cx="100" cy="106" rx="42" ry="13"/>
<ellipse cx="44" cy="76" rx="6" ry="18"/>
<ellipse cx="112" cy="76" rx="12" ry="8"/>
<ellipse cx="168" cy="42" rx="8" ry="8"/>
</g>
<rect width="225.4" height="128.5" filter="url(#mtx)" opacity="0.22"/>
<rect width="225.4" height="128.5" filter="url(#mtx2)" opacity="0.2"/>
</g>
</svg>
<span style="left:418.5px;top:476px;width:120px;text-align:center;font-size:11px;line-height:11px;font-weight:bold;color:#f4f4f4;white-space:nowrap;text-shadow:0 0 2px #000,1px 1px 1px #000;">z-moon2</span>
<div class="panel" style="left:617.3px;top:89.8px;width:290.7px;height:349.4px;background:linear-gradient(#121212,#0b0b0b);border-color:#303030;"></div>
<div class="btn gry" style="left:635px;top:99.4px;width:55.9px;height:18.3px;text-shadow:none;"></div>
<span class="bt gry" style="left:635px;width:55.9px;top:105px;font-size:9px;line-height:9px;">Templates</span>
<div class="btn gry" style="left:694.3px;top:99.4px;width:59.5px;height:18.3px;text-shadow:none;"></div>
<span class="bt gry" style="left:694.3px;width:59.5px;top:105px;font-size:9px;line-height:9px;">Sequences</span>
<div class="btn gry" style="left:758.7px;top:99.4px;width:59.1px;height:18.3px;text-shadow:none;"></div>
<span class="bt gry" style="left:758.7px;width:59.1px;top:105px;font-size:9px;line-height:9px;">Colormaps</span>
<div class="btn gry" style="left:821.6px;top:99.4px;width:43.3px;height:18.3px;text-shadow:none;"></div>
<span class="bt gry" style="left:821.6px;width:43.3px;top:105px;font-size:9px;line-height:9px;">Images</span>
<div class="btn " style="left:869.4px;top:99.4px;width:21.1px;height:18.3px;"></div>
<div style="left:875.8px;top:103.5px;width:8.4px;height:8.4px;border-radius:50%;background:#e33450;"></div>
<div class="btn " style="left:690.9px;top:140.8px;width:45.2px;height:17.7px;"></div>
<span class="bt " style="left:690.9px;width:45.2px;top:146px;font-size:9px;line-height:9px;">Preview</span>
<div class="btn" style="left:740.9px;top:140.8px;width:27px;height:18.9px;"></div>
<svg style="position:absolute;left:746.8px;top:142.5px" width="16" height="15" viewBox="0 0 16 15">
<rect x="0" y="0" width="15.6" height="14.7" fill="#000"/>
<rect x="0.6" y="3.1" width="14.4" height="11" rx="1.2" fill="none" stroke="#d8d8d8" stroke-width="0.9"/>
<rect x="0.8" y="9.3" width="7.6" height="4.9" fill="#f4f4f4"/>
<path d="M8.6 9 L14 3.6 M11.4 3.4 H14.2 V6.2" stroke="#e0e0e0" stroke-width="0.9" fill="none"/></svg>
<span style="left:773.7px;top:145px;font-size:9px;line-height:9px;font-weight:bold;color:#f0f0f0;white-space:nowrap;text-shadow:1px 1px 1px #000;">Output</span>
<div class="btn" style="left:807.2px;top:140.8px;width:27.5px;height:18.9px;"></div>
<svg style="position:absolute;left:813.1px;top:142.5px" width="16" height="15" viewBox="0 0 16 15">
<rect x="0" y="0" width="15.6" height="14.7" fill="#000"/>
<rect x="0.6" y="3.1" width="14.4" height="11" rx="1.2" fill="none" stroke="#d8d8d8" stroke-width="0.9"/>
<rect x="0.8" y="9.3" width="7.6" height="4.9" fill="#f4f4f4"/>
<path d="M8.6 9 L14 3.6 M11.4 3.4 H14.2 V6.2" stroke="#e0e0e0" stroke-width="0.9" fill="none"/></svg>
<div class="track" style="left:628px;top:201.5px;width:262.5px;height:7.3px;"></div>
<div class="tip" style="left:617.3px;top:177.4px;width:23.9px;height:13.9px;"></div>
<span class="tt" style="left:617.3px;width:23.9px;top:181px;">1 fps</span>
<div class="tiparr" style="left:624.9px;top:190.7px;"></div>
<div class="hdl" style="left:622.6px;top:197.7px;width:11.4px;height:11.4px;"></div>
<svg style="position:absolute;left:629px;top:240.3px" width="267.3" height="180.4" viewBox="0 0 267.3 180.4"><defs><filter id="fsb" x="-5%" y="-5%" width="110%" height="110%"><feGaussianBlur stdDeviation="0.45"/></filter><filter id="fbg" x="-10%" y="-10%" width="120%" height="120%"><feGaussianBlur stdDeviation="6"/></filter><clipPath id="pc"><rect width="267.3" height="180.4"/></clipPath></defs><rect width="267.3" height="180.4" fill="#000"/><g clip-path="url(#pc)"><g filter="url(#fbg)" opacity="0.55"><path d="M0 50 L80 40 L125 25 L170 45 L175 110 L130 150 L100 158 L0 162 Z" fill="#3a0300"/><path d="M150 95 L267 50 L267 158 L100 165 Z" fill="#2a0200"/></g><g filter="url(#fsb)"><path d="M144 65l8 -4M8 158l5 -2M24 104l5 -1M53 67l13 -4M124 87l5 -2M222 136l9 -3M260 64l6 -3M164 143l5 -1M150 42l11 -4M269 153l8 -3M153 128l4 -1M20 45l6 -2M169 96l8 -2M81 63l7 -2M184 127l4 -2M241 129l12 -4M258 125l11 -4M110 49l11 -3M271 81l5 -3M53 46l9 -3M127 40l13 -3M79 127l6 -1M117 30l7 -1M6 51l6 -1M55 65l6 -2M221 151l7 -2M216 99l5 -2M174 69l13 -4M126 103l12 -6M135 120l5 -1M53 45l6 -3M172 48l8 -2M266 128l5 -1M51 140l4 -1M138 105l12 -2M196 110l6 -1M116 32l5 -2M-2 158l6 -1M-2 153l5 -2M125 51l5 -1M37 53l5 -1M179 160l5 -1M149 147l11 -2M12 71l6 -1M45 128l9 -3M132 160l8 -4M31 156l13 -5M13 109l5 -1M89 152l9 -4M108 48l12 -4M47 153l5 -2M198 80l11 -5M22 128l4 -1M155 47l11 -4M218 78l6 -1M183 95l7 -3M153 115l10 -5M50 110l9 -3M165 149l4 -1M244 150l10 -2M149 69l7 -2M265 125l7 -2M207 153l6 -2M270 138l11 -2M48 85l7 -2M16 58l12 -4M156 59l9 -1M251 155l6 -1M15 150l10 -5M35 141l11 -4M23 149l5 -1M55 103l12 -2M231 135l11 -4M173 122l7 -1M215 126l8 -4M-4 111l6 -2M68 155l7 -2M13 139l5 -3M140 53l6 -3M139 40l7 -3M6 124l11 -3M80 42l8 -2M259 152l6 -2M182 124l6 -1M191 79l13 -2M156 74l8 -2M97 33l5 -3M153 126l10 -5M5 95l5 -1M88 36l12 -3M5 57l13 -2M169 41l4 -1M138 162l10 -5M162 152l6 -2M95 128l12 -5M48 112l6 -1M-1 159l10 -4M3 150l5 -1M50 82l10 -2M0 139l13 -3M227 131l11 -2M117 130l7 -3M173 108l10 -2M103 144l6 -2M23 67l6 -2M123 130l5 -2M48 46l6 -2M129 36l14 -2M257 95l6 -1M-1 82l8 -2M33 94l11 -6M17 151l6 -2M223 128l10 -4M143 133l4 -2M90 89l13 -4M2 93l11 -4M82 132l9 -4M254 113l8 -2M155 56l12 -3M131 138l12 -3M66 93l10 -2M71 155l4 -1M126 48l8 -3M53 135l7 -3M115 32l12 -4M271 129l5 -2M-1 79l10 -3M47 67l7 -2M36 140l13 -4M174 155l6 -1M76 130l9 -3M82 103l8 -1M40 133l7 -1M109 98l4 -2M29 156l5 -1M151 80l10 -2M146 77l13 -3M103 67l8 -2M60 107l6 -3M125 131l4 -1M102 147l6 -1M-4 73l12 -5M84 71l9 -2M181 136l5 -1M69 156l12 -4M1 132l11 -3M99 149l12 -5M160 155l12 -2M148 110l5 -1M109 92l6 -1M271 92l11 -2M18 112l12 -2M30 85l5 -2M148 110l7 -1M146 120l4 -2M257 72l9 -3M147 150l9 -4M51 107l7 -2M85 153l12 -3M98 121l8 -3M64 55l8 -1M-2 126l10 -4M74 89l13 -2M33 65l7 -2M63 44l6 -2M144 154l9 -2M47 130l6 -3M28 157l11 -3M23 144l7 -2M123 46l12 -2M231 97l8 -4M25 133l10 -2M-0 132l8 -2M27 108l11 -4M148 57l6 -3M157 77l13 -3M270 141l12 -3M170 120l6 -1M41 66l10 -2M185 146l5 -1M120 80l6 -3M187 120l4 -1M148 100l9 -2M87 132l5 -1M247 139l4 -2M48 125l9 -4M3 156l4 -2" stroke="#6a0300" stroke-width="0.9" fill="none"/><path d="M62 100l10 -2M1 83l5 -2M95 126l11 -4M198 150l9 -3M-4 147l9 -3M200 91l13 -5M64 114l7 -2M68 131l6 -3M133 130l6 -2M29 155l9 -3M101 138l11 -5M64 133l4 -1M10 91l12 -6M7 96l6 -3M81 52l13 -3M17 120l13 -5M92 57l12 -3M123 126l6 -2M136 46l12 -3M261 83l12 -6M246 128l5 -2M-4 125l12 -6M262 132l4 -1M19 111l6 -3M73 117l5 -2M41 152l7 -3M70 154l8 -2M158 65l9 -4M3 132l4 -1M183 121l8 -2M50 53l4 -2M78 130l12 -3M42 137l11 -3M-1 60l9 -2M50 76l5 -1M235 118l11 -2M83 120l8 -2M177 110l11 -4M245 69l11 -5M264 95l6 -2M37 121l13 -3M265 57l7 -2M124 134l10 -5M177 95l8 -4M113 114l9 -4M50 82l9 -2M32 59l8 -3M155 72l7 -1M170 60l9 -4M231 96l7 -3M-4 103l6 -1M166 57l13 -5M53 130l11 -2M146 62l11 -2M-1 157l13 -5M97 135l5 -1M56 68l10 -3M125 54l7 -1M49 141l6 -1M21 107l11 -2M90 94l11 -3M8 161l8 -3M53 98l10 -2M223 145l6 -1M147 72l5 -1M191 115l5 -2M44 68l4 -1M55 109l4 -2M52 92l12 -3M67 142l7 -3M57 48l9 -3M38 117l7 -3M1 123l6 -3M174 127l9 -4M178 161l9 -2M32 54l9 -3M117 147l13 -3M38 100l5 -1M35 70l7 -2M221 112l13 -4M213 85l8 -2M153 35l5 -2M87 134l4 -1M158 40l8 -3M8 50l5 -1M22 61l9 -4M79 134l9 -3M113 36l8 -2M23 107l6 -1M158 79l12 -6M54 111l8 -2M105 140l8 -3M107 147l7 -1M149 107l5 -2M29 61l8 -1M233 71l13 -5" stroke="#b00800" stroke-width="0.9" fill="none"/><path d="M95 42l11 -5M238 134l12 -6M37 88l10 -2M21 46l5 -1M249 90l7 -3M123 137l6 -1M54 43l6 -2M141 40l5 -3M161 127l5 -2M64 143l11 -5M74 113l12 -3M99 81l4 -1M53 106l9 -1M23 154l12 -5M264 88l13 -2M116 140l7 -1M132 127l7 -3M253 58l13 -3M137 70l8 -2M40 76l5 -1M120 44l12 -6M211 119l6 -2M13 62l6 -1M170 70l7 -1M59 112l7 -2M198 137l7 -2M58 119l4 -1M88 138l12 -3M126 96l4 -1M215 118l7 -3M8 140l11 -3M91 129l6 -1M41 120l5 -2M34 110l11 -2M29 77l11 -2M113 30l10 -4M142 61l10 -4M179 155l8 -1M4 132l7 -1M8 152l10 -5M166 114l10 -2M213 102l7 -2M226 109l8 -1M159 139l7 -3M236 132l5 -2M240 98l6 -2M80 118l10 -2M165 84l6 -3M-4 141l9 -1M231 127l7 -3M249 71l4 -2M246 106l8 -3M129 146l5 -2M97 36l10 -3M135 38l5 -1M84 121l9 -3M48 132l7 -1M61 41l8 -1M32 130l6 -2M40 80l7 -2M130 144l7 -3M166 67l7 -3M242 99l12 -5M227 107l14 -3M222 133l9 -1M171 62l7 -4M121 48l12 -6M142 62l8 -2M13 118l11 -6M1 130l7 -3M271 52l5 -1M37 135l6 -1M69 57l8 -3M60 115l8 -2M165 124l10 -3M159 53l12 -5M230 104l9 -2M169 56l13 -6M9 97l8 -3M11 78l4 -1M138 84l4 -2M51 48l10 -2M14 101l9 -2M133 97l8 -4M60 108l10 -5M230 145l10 -4M263 69l11 -5M32 138l8 -2M170 67l11 -2M230 73l8 -2M159 108l9 -3M155 131l6 -1M12 115l9 -3M117 33l6 -2M102 150l5 -2M150 83l12 -6M42 119l14 -3M134 113l11 -5M122 123l6 -2M20 47l7 -2M85 148l9 -3M164 112l12 -5M20 144l7 -3M219 115l7 -1M129 29l10 -3M34 64l12 -5M163 85l7 -3M256 73l12 -6M15 138l5 -2M244 104l10 -4M264 98l5 -1M166 118l8 -3M44 87l10 -5M36 59l7 -2M68 46l4 -1M228 76l4 -2M52 54l6 -3M238 83l5 -2M129 43l6 -2M75 141l5 -2M104 33l11 -2M59 60l6 -3M123 103l5 -1M170 148l9 -4M150 74l5 -2M15 129l8 -3M166 149l6 -2M-0 147l12 -3M240 149l8 -3M31 116l6 -1M40 125l7 -3M160 128l12 -2M26 147l7 -2M62 152l5 -2M190 121l8 -2M68 115l10 -4M193 147l6 -3M27 67l4 -2M7 51l10 -3M106 130l9 -2M19 64l12 -2M171 127l4 -2M242 76l11 -4M54 54l8 -1M23 96l7 -2M151 49l13 -5M143 159l12 -5M93 150l7 -2M23 132l5 -2M43 61l12 -2M98 145l5 -2M-1 114l12 -4M51 79l6 -3M158 132l8 -4M172 92l9 -3M17 159l6 -2M213 121l8 -3M51 59l4 -2M-2 68l9 -5M92 84l10 -3M4 118l6 -2M85 136l11 -2M63 121l8 -3M111 51l8 -3M79 114l5 -2M66 44l9 -2M14 94l8 -1M178 150l6 -3M168 48l6 -3M85 143l7 -2M87 56l8 -1M36 67l9 -4M142 156l5 -2M158 89l9 -4M66 128l8 -3M119 56l12 -4M66 107l11 -5M182 137l12 -6M85 47l6 -1M4 65l5 -1M109 101l12 -6M264 149l11 -5M161 52l11 -3M44 47l12 -6M55 73l7 -2M188 117l9 -2M144 104l12 -4" stroke="#6a0300" stroke-width="1.3" fill="none"/><path d="M166 124l13 -3M214 85l9 -4M51 80l7 -3M15 122l12 -5M138 42l10 -3M107 61l5 -2M1 53l9 -3M8 115l9 -4M103 161l13 -3M147 132l11 -4M82 150l5 -2M9 137l7 -4M268 84l10 -2M11 151l10 -3M165 120l8 -2M5 156l10 -2M25 116l12 -3M193 115l8 -3M154 98l9 -2M125 102l13 -5M214 155l10 -3M208 99l9 -2M170 75l12 -2M183 84l6 -1M91 94l4 -1M246 154l12 -3M111 42l9 -4M11 133l12 -6M13 135l10 -5M115 91l5 -1M148 110l10 -3M224 93l13 -3M22 50l9 -4M152 38l9 -2M136 124l11 -2M190 148l9 -1M94 73l6 -3M272 72l6 -2M162 114l6 -3M117 31l4 -1M19 57l14 -2M93 127l13 -5M26 147l9 -4M54 57l10 -4M255 114l9 -4M224 121l9 -5M174 100l12 -6M20 116l6 -2M10 125l8 -4M95 121l4 -1M104 144l11 -2M103 58l5 -2M28 67l8 -4M218 124l13 -3M195 136l8 -2M15 86l8 -2M152 55l5 -1M38 143l14 -2M215 96l11 -5M197 97l5 -1M41 64l4 -2M1 66l11 -6M185 86l5 -1M256 132l6 -3M266 112l11 -2M2 65l8 -4M7 144l9 -2M176 137l10 -3M172 86l8 -2M19 143l6 -3M232 79l13 -3M29 49l10 -2M96 121l14 -2M88 46l6 -2M97 46l11 -2M63 107l4 -1M179 122l7 -3M32 53l5 -2M136 90l11 -3M6 141l9 -4M176 97l8 -2M23 147l9 -2M43 119l11 -5M261 69l8 -2M8 90l4 -2M178 90l8 -4M3 83l11 -2M0 47l12 -6M43 43l4 -1M230 151l11 -5M13 122l8 -1M85 76l4 -2M13 53l6 -3M78 133l11 -3M18 160l11 -3M155 80l9 -2M271 136l5 -1M7 101l7 -1M139 93l6 -2M108 97l11 -2M206 127l7 -3M79 130l6 -3M142 142l9 -2M1 47l9 -3M143 44l13 -3" stroke="#b00800" stroke-width="1.3" fill="none"/><path d="M128 119l5 -1M264 54l6 -3M57 109l7 -2M25 114l12 -4M66 137l7 -3M260 69l8 -3M123 26l9 -2M266 87l12 -5M158 116l4 -1M197 84l12 -6M173 46l6 -2M10 130l4 -2M241 123l8 -2M35 132l9 -2M256 65l6 -1M40 125l8 -2M175 149l8 -2M19 68l7 -2M85 154l4 -1M122 35l10 -4M69 130l4 -2M-2 124l11 -3M55 115l11 -2M233 88l12 -6M72 117l11 -3M42 122l10 -5M33 123l5 -3M223 119l9 -5M207 76l13 -6M66 154l5 -3M146 149l10 -5M25 113l6 -2M239 122l13 -3M218 151l8 -1M71 43l5 -1M17 159l8 -1M-4 75l13 -6M9 130l11 -2M156 40l9 -5" stroke="#e82008" stroke-width="0.9" fill="none"/><path d="M128 29l7 -2M126 50l9 -1M53 125l10 -5M10 50l8 -3M250 106l6 -2M83 91l8 -3M91 127l10 -4M153 115l10 -3M161 121l10 -3M16 127l6 -2" stroke="#ff6018" stroke-width="1.3" fill="none"/><path d="M137 127l9 -3M45 139l12 -3M203 155l13 -3M122 100l11 -5M48 69l8 -1M172 43l4 -2M126 47l8 -2M167 66l12 -2M62 59l14 -3M18 107l8 -3M12 124l7 -2M200 127l9 -3M16 113l10 -2M169 40l4 -1M250 132l4 -1M60 106l9 -4M90 149l12 -6M137 27l11 -5M182 137l12 -2M246 76l7 -2M235 131l11 -4M37 123l9 -2M54 120l8 -1M86 60l7 -3M45 153l12 -5M28 83l8 -4M124 155l11 -3M79 140l10 -3M141 125l6 -3M153 56l8 -4M120 40l11 -2" stroke="#e82008" stroke-width="1.3" fill="none"/><path d="M131 130l8 -2M127 49l6 -2M25 102l10 -4M143 128l9 -4M207 76l5 -2M45 78l12 -2M156 96l9 -2" stroke="#ff6018" stroke-width="0.9" fill="none"/><path d="M154.8 18.8L158.5 21.7M155.3 18.4L158.5 21.2M160.0 22.7L159.4 21.8M158.6 21.1L160.8 23.3M161.4 23.9L163.7 26.5M164.3 27.1L165.3 28.7M164.8 28.2L164.5 28.7M166.7 30.9L167.1 32.2M167.9 33.1L168.4 34.8M166.0 32.3L169.4 37.1M166.5 34.1L170.0 39.2M167.6 36.8L171.3 42.1M170.6 41.3L171.0 43.5M171.1 43.6L169.5 43.8M171.3 45.6L173.1 49.3M170.9 47.1L170.8 48.9M172.4 50.5L174.2 54.3M172.6 52.7L172.4 54.5M174.6 56.7L172.7 56.7M174.5 58.6L174.2 60.2M174.2 60.2L173.8 61.7M173.0 61.0L174.4 64.5M174.3 64.5L173.2 65.6M175.6 68.0L174.6 69.4M173.1 67.9L174.7 71.9M173.5 70.8L174.0 73.8M107.0 29.1L108.0 26.2M109.1 27.4L111.1 25.4M112.6 26.9L115.1 25.5M114.0 24.3L118.3 24.7M117.6 24.0L120.6 23.1M122.2 24.8L122.0 20.8M122.4 21.1L128.1 23.1M126.5 21.5L130.5 21.9M127.4 18.8L133.5 21.4M130.3 18.2L135.3 19.8M134.7 19.2L138.2 19.6M136.5 17.8L139.7 18.0M138.8 17.1L142.8 18.3M143.8 19.3L144.1 17.0M143.8 16.7L145.9 16.5M147.1 17.7L150.1 18.6M150.0 18.5L149.4 16.1M151.1 17.8L154.1 19.3M152.8 18.0L153.3 17.3" stroke="#f8b838" stroke-width="2" fill="none"/><path d="M155 18l5 -8M155 20l1 -6M156 21l-3 -6M157 20l-4 -8M158 23l3 -3M159 23l-2 -5M159 22l4 -6M160 22l5 -7M163 23l-1 -4M160 24l-1 -3M163 26l0 -6M164 24l3 -3M165 26l-1 -5M166 29l-2 -9M166 27l-4 -8M163 31l6 -6M168 29l-0 -8M166 32l3 -7M168 35l1 -8M166 35l1 -9M169 36l0 -3M168 37l5 -8M171 38l0 -5M169 37l5 -5M171 43l2 -8M170 41l-2 -7M169 45l-1 -4M170 44l4 -4M169 44l-0 -4M171 47l-2 -10M171 50l0 -5M170 48l-2 -5M171 49l4 0M173 51l4 1M172 53l5 -0M175 53l10 -3M175 56l4 -2M174 56l7 1M176 59l6 -5M172 56l7 1M175 61l8 -2M173 59l7 -5M175 63l5 -1M175 64l3 -1M176 63l9 -3M173 65l4 -1M175 68l6 -4M173 67l5 1M176 68l9 3M173 69l4 -1M173 73l6 -1M173 73l4 -0M108 30l3 -5M108 27l-0 -3M111 27l2 -4M109 27l-3 -7M113 26l4 -7M111 26l-1 -6M115 27l-2 -10M115 27l-3 -6M119 23l4 -8M117 23l3 -5M119 22l4 -4M120 24l5 -6M122 23l4 -6M125 22l1 -3M126 21l2 -4M125 21l2 -3M131 19l2 -8M130 20l-3 -6M133 18l1 -4M132 21l4 -7M135 17l-2 -4M135 18l-1 -4M136 20l0 -4M137 17l-3 -6M138 19l-1 -4M138 17l-3 -5M142 20l-1 -5M143 20l7 -7M143 19l5 -7M143 18l-2 -4M149 18l-3 -9M147 18l-2 -6M150 19l-1 -10M150 19l5 -6M151 17l2 -6M150 16l-2 -6M151 19l-1 -9M155 20l0 -4" stroke="#f8b838" stroke-width="1" fill="none"/><path d="M175.0 74.9L175.9 78.4M173.7 76.2L173.7 79.0M172.3 77.6L175.1 83.2M174.4 82.6L171.7 82.7M172.7 83.7L173.5 87.4M171.5 85.4L172.8 89.7M171.4 88.3L170.5 90.4M171.5 91.4L171.8 94.7M170.2 93.2L171.9 97.9M171.0 96.9L167.9 96.9M170.7 99.7L168.0 100.0M170.4 102.5L167.8 102.8M168.3 103.4L165.5 103.5M166.6 104.7L166.4 107.4M165.0 106.0L164.4 108.3M163.3 107.3L164.2 111.2M162.6 109.5L164.5 114.5M162.7 112.6L161.0 114.0M161.4 114.4L159.0 115.1M161.5 117.6L160.6 119.7M159.8 118.9L155.9 118.2M156.9 119.2L157.1 122.6M154.8 120.2L154.3 122.9M154.0 122.6L153.6 125.3" stroke="#f09028" stroke-width="2" fill="none"/><path d="M173 73l6 2M175 79l7 -3M174 81l3 -0M173 83l5 2M175 85l7 -1M174 85l9 1M174 89l4 -1M171 91l3 0M172 95l6 0M171 95l6 -1M171 98l5 -4M169 101l5 -2M169 102l5 -3M169 107l7 -5M166 107l4 -1M166 110l8 -4M163 110l7 2M163 112l6 -3M163 114l8 -1M159 115l7 -0M157 119l6 -3M159 120l8 -6M155 119l6 -4M156 122l7 -4" stroke="#f09028" stroke-width="1" fill="none"/><path d="M151.3 123.1L150.4 125.3M151.6 126.6L149.9 127.9M148.4 126.5L148.8 130.0M147.1 128.3L145.8 130.2M147.3 131.7L142.8 130.4M143.0 130.6L141.7 132.4M144.0 134.7L140.2 134.0M142.4 136.2L137.5 134.4M139.3 136.2L137.9 137.8M138.0 138.0L133.7 136.7M133.5 136.5L132.5 138.5M133.4 139.5L131.3 140.6M132.2 141.4L130.3 142.7M129.8 142.2L125.3 141.0M125.6 141.2L123.8 142.8M124.4 143.4L121.9 144.2M122.6 144.8L120.7 146.3M121.6 147.1L117.8 146.6M116.8 145.7L117.8 149.9M116.2 148.3L113.6 148.9M114.4 149.7L110.0 148.5M111.8 150.3L110.8 152.4M107.8 149.4L108.5 153.1M105.9 150.5L104.2 151.7M105.3 152.8L100.9 151.2M101.9 152.1L99.8 152.8M98.9 151.8L98.0 153.5M97.9 153.3L96.3 154.2M94.0 151.8L94.9 154.9M91.6 151.6L91.2 153.2M90.5 152.5L88.2 152.1M88.7 152.6L84.4 150.1M87.1 152.9L82.4 150.0M85.2 152.8L80.0 149.3M81.1 150.4L77.5 148.6M77.8 148.9L76.8 149.5M76.7 149.3L73.1 147.3M71.0 145.1L70.6 146.1M68.9 144.5L68.2 145.0M66.9 143.7L63.1 141.1" stroke="#e86818" stroke-width="2" fill="none"/><path d="M153 126l8 -4M150 124l9 3M151 126l5 -2M146 130l4 -2M145 132l4 1M143 130l5 -2M141 131l8 -2M140 134l6 -5M137 136l10 -2M138 138l6 -2M134 137l3 -1M133 140l3 -1M131 139l8 -5M130 143l4 0M129 141l6 -4M124 143l10 2M122 143l3 -2M120 146l8 -3M117 148l3 -1M115 150l7 -2M113 150l4 1M110 149l7 -6M108 150l6 1M106 152l7 -3M105 151l8 -4M102 154l4 -3M101 153l8 -4M97 152l4 -4M97 152l5 -2M92 153l5 -3M89 153l4 -0M89 151l4 -2M88 154l8 3M84 150l9 -3M82 151l4 1M79 151l7 -3M74 146l9 2M72 148l7 -2M70 144l8 1M67 145l4 -3" stroke="#e86818" stroke-width="1" fill="none"/><path d="M63.2 141.2L61.4 140.4M62.2 141.2L58.5 138.3M57.1 136.9L54.8 135.3M55.8 136.3L54.7 135.7M54.2 135.2L50.6 131.8M50.0 131.2L50.9 132.1M49.3 130.6L45.8 126.9M46.0 127.1L44.4 125.1M46.9 127.5L45.5 125.4M45.2 125.1L43.3 122.3M41.4 120.4L40.5 118.2M43.1 120.8L39.5 115.7M41.5 117.7L39.3 113.7M40.3 114.6L38.9 111.2M40.2 112.4L38.4 108.4M38.6 108.6L38.5 105.9M40.0 107.4L39.0 103.7M39.6 104.2L38.7 100.4M38.1 99.8L38.9 97.4M40.3 98.9L37.7 93.0M40.7 96.0L40.4 92.3M40.2 92.1L38.7 87.1M40.6 89.0L40.7 85.4M39.3 84.1L42.5 83.5M41.8 82.8L43.7 81.0M40.3 77.5L42.6 76.0M43.1 76.5L45.3 74.8M43.4 72.9L46.3 72.0M46.2 71.9L48.1 69.9M45.4 67.2L49.6 67.6M49.4 67.4L49.6 63.7M49.1 63.2L52.0 61.9M51.0 60.9L54.1 59.7M54.8 60.4L57.2 58.3M54.5 55.6L57.0 53.5M59.4 55.9L62.5 54.2M60.8 52.6L62.5 49.4M62.3 49.2L68.3 50.3M68.7 50.6L69.8 46.9M69.6 46.6L72.4 44.4M73.7 45.8L76.3 43.4M77.3 44.3L80.7 42.8M81.1 43.2L83.7 40.9M84.5 41.7L86.1 38.5M85.6 37.9L89.9 37.5M89.8 37.4L92.4 35.4M90.9 33.9L95.6 34.1M93.9 32.4L97.0 31.1M98.1 32.2L101.5 31.5M99.7 29.6L102.6 28.6M103.8 29.8L107.9 30.0" stroke="#d84010" stroke-width="2" fill="none"/><path d="M63 141l4 -2M62 139l3 1M61 140l9 -4M54 136l4 -1M55 134l4 1M51 132l8 -0M48 130l5 -1M47 130l10 -0M45 127l3 -3M44 124l5 -1M44 123l3 -3M43 119l3 -0M41 116l3 -2M42 116l10 2M39 114l8 0M40 108l8 -3M39 105l8 -1M39 102l7 -7M40 100l5 -4M39 99l5 -3M37 94l7 1M38 91l6 -1M39 86l4 1M41 86l7 1M39 82l4 -1M43 81l9 2M43 77l5 -4M44 74l7 -6M45 72l4 -2M47 67l8 -5M47 66l7 -3M49 64l9 -3M50 63l9 1M55 60l6 0M57 57l6 1M57 53l6 2M63 55l8 -4M63 50l3 1M68 48l4 -1M69 47l4 -2M73 46l4 -2M75 45l-3 -7M75 42l2 -3M80 40l0 -8M78 42l-1 -3M82 42l1 -5M84 40l-4 -7M88 39l-4 -8M88 37l4 -7M91 37l2 -3M88 39l3 -5M92 36l-2 -6M91 37l7 -6M95 32l2 -8M95 32l0 -6M98 32l-3 -6M97 32l2 -7M99 31l1 -4M103 30l2 -7M106 29l-2 -7M103 28l2 -7" stroke="#d84010" stroke-width="1" fill="none"/><path d="M122.3 50.3L121.2 47.7M120.5 46.9L124.3 49.5M126.5 51.7L126.7 51.0M126.2 50.5L128.2 51.8M130.3 53.8L129.8 52.9M128.1 51.3L130.7 53.7M130.4 53.4L131.0 54.1M133.8 56.9L133.0 56.4M134.7 58.1L138.0 62.0M134.9 58.9L136.7 61.5M136.3 61.1L135.9 61.7M137.0 62.8L138.7 65.7M137.1 64.1L138.5 66.9M140.0 68.4L139.6 69.6M138.1 68.1L140.3 72.2M139.9 71.8L140.5 74.6M141.1 75.3L142.6 79.3M139.4 76.1L137.5 77.0M137.8 77.4L140.6 83.3M139.0 81.7L136.8 82.8M140.4 86.4L138.4 87.9M138.8 88.3L138.7 91.8M138.5 91.6L137.3 94.1M137.9 94.7L137.2 97.7M136.3 96.8L131.7 96.0M131.9 96.2L131.5 99.4M134.5 102.5L130.0 101.6M133.2 104.8L131.5 106.5M129.7 104.7L126.9 105.3M126.5 104.9L128.9 111.0M124.7 106.8L125.3 111.0M123.1 108.8L124.0 113.4M122.0 111.4L122.3 115.6M120.3 113.6L120.2 117.2M120.7 117.8L118.0 118.9M117.1 118.0L112.2 116.9M114.6 119.3L112.2 120.5M112.6 121.0L108.7 120.7M112.2 124.2L108.1 123.6M109.1 124.5L107.2 126.1M106.8 125.6L103.7 125.7M100.5 122.5L100.9 125.9M102.1 127.1L97.9 125.8M99.8 127.7L96.5 127.4M93.7 124.6L91.2 125.1M93.0 126.9L88.1 125.0M90.2 127.1L83.8 123.6M87.6 127.5L83.0 125.6M84.9 127.5L78.7 123.9M77.7 123.0L78.1 125.8M77.5 125.2L73.3 123.2M72.5 122.4L72.8 124.7M71.5 123.4L68.4 121.9M65.9 119.3L64.6 119.3M66.9 121.6L61.4 116.9M65.5 121.1L62.2 118.2M61.1 117.1L59.4 115.4M60.5 116.4L60.8 116.3M57.7 113.2L60.3 115.0M58.4 113.0L58.5 112.0M57.1 110.6L57.2 109.2M57.5 109.5L55.2 105.4M57.3 107.5L52.7 100.9M55.6 103.7L56.0 101.9M56.1 102.0L54.3 97.9M54.4 97.9L53.7 94.7M52.4 93.4L54.4 92.7M51.9 90.2L53.6 89.1M53.9 89.5L52.5 85.3M53.8 86.6L53.1 83.1M56.6 86.6L56.8 83.9M56.2 83.3L56.4 80.3M58.2 82.1L59.2 79.8M56.9 77.5L59.3 76.3M58.9 75.9L63.3 76.5M60.4 73.6L65.1 74.6M63.5 72.9L66.2 71.7M62.9 68.4L65.7 67.2M67.2 68.7L71.0 68.5M67.2 64.7L71.3 64.8M72.0 65.5L73.3 62.8M71.9 61.4L73.9 59.5M76.9 62.4L77.5 59.2M77.1 58.8L80.8 58.8M81.6 59.6L80.7 54.9M82.6 56.8L86.1 56.4M86.1 56.4L85.7 52.0M90.0 56.2L93.2 55.3M90.7 52.8L91.5 49.4M91.5 49.4L94.9 48.6M96.8 50.5L101.5 51.2M99.9 49.5L102.4 48.1M102.0 47.7L108.9 50.8M106.4 48.3L108.3 46.8M108.6 47.1L112.7 47.9M112.5 47.7L114.3 46.7M116.6 49.0L116.7 46.7M119.4 49.3L120.1 48.1" stroke="#c82008" stroke-width="1.3" fill="none"/><path d="M155 21l4 -3M159 23l2 -6M156 21l-0 -10M161 27l-1 -4M163 26l0 -6M165 31l7 -5M168 31l2 -5M166 39l3 -8M171 37l1 -5M170 39l2 -6M176 57l4 -5M173 55l6 -4M176 59l-2 -7M176 61l5 -5M175 66l1 -9M177 67l-3 -10M173 80l4 -11M174 88l-0 -7M87 42l-2 -7M85 40l-0 -5M95 35l-2 -12M95 35l2 -7M110 29l4 -5M111 29l6 -7M116 23l9 -7M123 23l6 -4M128 21l8 -6M129 24l3 -8M134 22l2 -9M131 20l3 -10M133 20l4 -6M141 20l2 -5M149 18l10 -7M153 19l7 -6" stroke="#f87018" stroke-width="1.1" fill="none"/><path d="M157 23l1 -7M157 22l5 -4M161 23l-1 -5M167 27l3 -9M161 31l-0 -8M163 31l-0 -10M166 30l4 -3M168 32l2 -4M170 34l5 -9M166 38l-3 -9M168 44l2 -6M170 50l2 -4M173 51l2 -7M172 54l6 -6M172 50l7 -5M172 58l4 -4M175 58l4 -9M173 64l2 -9M175 62l-2 -9M176 69l1 -5M175 71l-0 -6M175 77l3 -10M173 79l-2 -6M171 81l5 -3M170 87l7 -10M171 89l6 -7M82 43l-0 -4M81 44l2 -10M85 40l5 -6M103 33l4 -9M105 30l9 -6M108 31l3 -7M109 29l4 -6M115 29l4 -3M121 26l7 -7M121 26l5 -5M121 24l7 -6M122 25l1 -7M126 24l4 -9M135 23l2 -4M140 20l10 -6M142 21l3 -9M142 18l2 -5M149 20l3 -5M149 22l3 -9" stroke="#e85010" stroke-width="1.1" fill="none"/><path d="M153 18l-1 -10M158 21l-0 -9M159 20l3 -3M163 24l-4 -10M169 33l6 -4M170 39l-1 -11M172 44l1 -4M171 43l1 -8M174 48l-3 -10M175 50l0 -12M171 60l7 -6M176 57l-0 -6M177 62l0 -7M175 65l4 -4M172 67l-3 -12M177 73l4 -9M177 74l5 -5M174 72l7 -5M173 74l6 -7M175 77l1 -8M176 77l-2 -5M175 82l7 -9M171 82l3 -6M172 85l4 -3M89 40l6 -6M90 36l3 -9M92 38l3 -9M90 37l5 -7M91 39l1 -6M103 32l-3 -9M100 32l3 -3M103 31l9 -6M105 33l9 -6M108 28l-4 -11M114 30l-2 -10M115 26l6 -7M116 28l5 -10M117 27l6 -7M123 25l-0 -5M126 22l-1 -5M132 20l4 -5M133 22l-1 -4M139 18l-1 -4M139 19l5 -10M145 20l-0 -7M147 21l3 -10M144 19l9 -6M147 19l4 -4M146 20l0 -10M151 17l7 -7M156 21l-3 -11" stroke="#ffc040" stroke-width="1.1" fill="none"/><path d="M159 20l-2 -7M158 26l2 -4M159 26l4 -2M163 28l-1 -5M161 25l2 -5M161 28l5 -7M167 30l-0 -5M165 34l-1 -8M166 36l3 -8M169 39l3 -3M172 40l-2 -9M170 45l-2 -10M170 46l7 -7M172 49l3 -5M168 49l5 -4M174 47l4 -3M172 57l-1 -11M174 55l1 -7M174 63l6 -5M176 66l9 -6M176 71l0 -5M172 72l3 -3M175 75l3 -6M171 74l3 -10M173 85l7 -5M172 82l-1 -4M173 86l9 -7M174 87l1 -9M89 37l-0 -11M92 39l0 -6M96 33l5 -10M98 35l8 -5M101 32l2 -4M100 32l4 -3M103 31l4 -11M107 29l1 -10M113 27l2 -10M127 22l0 -10M129 22l-1 -9M134 21l3 -9M136 19l-2 -8M135 20l-1 -6M143 21l-0 -9M147 17l2 -4M151 21l1 -11M155 20l4 -4M151 18l5 -5" stroke="#ff9a28" stroke-width="1.1" fill="none"/></g></g></svg>
<span style="left:692.7px;top:245px;width:140px;text-align:center;font-size:11px;line-height:11px;font-weight:bold;color:#f2f2f2;white-space:nowrap;text-shadow:1px 1px 1px #000;">1626092863060</span>
<div class="panel" style="left:617.4px;top:455.1px;width:290.6px;height:198.2px;background:linear-gradient(#111,#080808);border-color:#303030;"></div>
<div class="btn " style="left:660.1px;top:465.6px;width:52.4px;height:16.9px;"></div>
<span class="bt " style="left:660.1px;width:52.4px;top:470px;font-size:9px;line-height:9px;">Save new</span>
<div class="btn " style="left:717.3px;top:465.6px;width:41.6px;height:16.9px;"></div>
<span class="bt " style="left:717.3px;width:41.6px;top:470px;font-size:9px;line-height:9px;">Update</span>
<div class="btn " style="left:764.1px;top:465.6px;width:21.6px;height:16.9px;"></div>
<svg style="position:absolute;left:769.5px;top:468.5px" width="11" height="10" viewBox="0 0 11 10">
<circle cx="5.8" cy="5.2" r="3.2" fill="#3d8fd8"/><circle cx="5.8" cy="5.2" r="1.4" fill="#9fd0f8"/>
<path d="M1 1.8 Q2.5 0.6 4 1.8" stroke="#9ab" stroke-width="0.8" fill="none"/><path d="M8 1.6 L9.8 1" stroke="#9ab" stroke-width="0.8"/></svg>
<div class="btn " style="left:790.1px;top:465.6px;width:34.7px;height:16.9px;"></div>
<span class="bt " style="left:790.1px;width:34.7px;top:470px;font-size:9px;line-height:9px;">Clear</span>
<div class="btn " style="left:828.8px;top:465.6px;width:37.2px;height:16.9px;"></div>
<span class="bt " style="left:828.8px;width:37.2px;top:470px;font-size:9px;line-height:9px;">Reset</span>
<div class="btn " style="left:720.3px;top:493.4px;width:58.7px;height:17.3px;"></div>
<span class="bt " style="left:720.3px;width:58.7px;top:498px;font-size:9px;line-height:9px;">Acid drops</span>
<div class="btn" style="left:784.1px;top:493.4px;width:20.6px;height:17.3px;"></div>
<svg style="position:absolute;left:790.4px;top:497.3px" width="8" height="10" viewBox="0 0 8 10">
<path d="M2.2 5.8 V3.3 A1.8 1.8 0 0 1 5.8 3.3 V4.2" stroke="#a9b0b8" stroke-width="1.2" fill="none"/>
<rect x="1.2" y="5.5" width="5.6" height="4.4" rx="0.8" fill="#f8a830"/></svg>
<span style="left:741.7px;top:517px;font-size:9px;line-height:9px;font-weight:bold;color:#f0f0f0;white-space:nowrap;text-shadow:1px 1px 1px #000;">Bandpass</span>
<div class="track" style="left:628.7px;top:548.9px;width:262.3px;height:7.7px;"></div>
<div class="trackfill" style="left:638.3px;top:548.9px;width:242.3px;height:7.7px;"></div>
<div class="tip" style="left:630.3px;top:525.2px;width:17.5px;height:14.2px;"></div>
<span class="tt" style="left:630.3px;width:17.5px;top:529px;">10</span>
<div class="tiparr" style="left:635px;top:538.8px;"></div>
<div class="tip" style="left:870px;top:525.2px;width:21.7px;height:14.2px;"></div>
<span class="tt" style="left:870px;width:21.7px;top:529px;">245</span>
<div class="tiparr" style="left:877.3px;top:538.8px;"></div>
<div class="hdl" style="left:632.6px;top:544.9px;width:11.4px;height:11.4px;"></div>
<div class="hdl" style="left:874.9px;top:544.9px;width:11.4px;height:11.4px;"></div>
<div class="" style="left:628.7px;top:564.3px;width:146.2px;height:18.8px;background:#222;border:1px solid #404040;border-radius:2px;"></div>
<span style="left:628.8px;top:569px;width:146px;text-align:center;font-size:11px;line-height:11px;font-weight:normal;color:#e0e0e0;white-space:nowrap;">Oscillo polar</span>
<div class="sel" style="left:783.3px;top:567px;width:72.6px;height:14.4px;background:#000;border-color:#4a4a4a;"><svg style="position:absolute;left:62px;top:3.2px" width="7" height="6" viewBox="0 0 7 6"><path d="M0.8 1.5 L3.5 4.2 L6.2 1.5" stroke="#ddd" stroke-width="1.2" fill="none"/></svg></div>
<span style="left:792.5px;top:571px;font-size:9px;line-height:9px;font-weight:bold;color:#f0f0f0;white-space:nowrap;">Overlay</span>
<div class="btn" style="left:869.8px;top:568.2px;width:21.2px;height:17.8px;"></div>
<svg style="position:absolute;left:877.4px;top:572.1px" width="6" height="11" viewBox="0 0 6 11"><path d="M3 0.5 V9.5" stroke="#ddd" stroke-width="1"/><path d="M1 7.2 L3 10 L5 7.2 Z" fill="#ddd"/></svg>
<div class="" style="left:628.7px;top:589.1px;width:146.2px;height:17.5px;background:#222;border:1px solid #404040;border-radius:2px;"></div>
<span style="left:628.8px;top:593px;width:146px;text-align:center;font-size:11px;line-height:11px;font-weight:normal;color:#e0e0e0;white-space:nowrap;">Hurricane</span>
<div class="sel" style="left:783.3px;top:590.8px;width:72.6px;height:13.9px;background:#000;border-color:#4a4a4a;"><svg style="position:absolute;left:62px;top:2.95px" width="7" height="6" viewBox="0 0 7 6"><path d="M0.8 1.5 L3.5 4.2 L6.2 1.5" stroke="#ddd" stroke-width="1.2" fill="none"/></svg></div>
<span style="left:792.5px;top:594px;font-size:9px;line-height:9px;font-weight:bold;color:#f0f0f0;white-space:nowrap;">Normal</span>
<div class="btn" style="left:869.8px;top:591.7px;width:21.2px;height:17.8px;"></div>
<svg style="position:absolute;left:877.4px;top:595.6px" width="6" height="11" viewBox="0 0 6 11"><path d="M3 0.5 V9.5" stroke="#ddd" stroke-width="1"/><path d="M1 7.2 L3 10 L5 7.2 Z" fill="#ddd"/></svg>
<div class="" style="left:628.7px;top:612.6px;width:146.2px;height:18.1px;background:#222;border:1px solid #404040;border-radius:2px;"></div>
<span style="left:628.8px;top:617px;width:146px;text-align:center;font-size:11px;line-height:11px;font-weight:normal;color:#e0e0e0;white-space:nowrap;">Light blur</span>
<div class="sel" style="left:783.3px;top:614.3px;width:72.6px;height:15.2px;background:#000;border-color:#4a4a4a;"><svg style="position:absolute;left:62px;top:3.6px" width="7" height="6" viewBox="0 0 7 6"><path d="M0.8 1.5 L3.5 4.2 L6.2 1.5" stroke="#ddd" stroke-width="1.2" fill="none"/></svg></div>
<span style="left:792.5px;top:618px;font-size:9px;line-height:9px;font-weight:bold;color:#f0f0f0;white-space:nowrap;">Normal</span>
<div class="btn" style="left:869.8px;top:615.5px;width:21.2px;height:18.1px;"></div>
<svg style="position:absolute;left:877.4px;top:619.55px" width="6" height="11" viewBox="0 0 6 11"><path d="M3 0.5 V9.5" stroke="#ddd" stroke-width="1"/><path d="M1 7.2 L3 10 L5 7.2 Z" fill="#ddd"/></svg>
<div class="panel" style="left:922.4px;top:89.6px;width:124.8px;height:563.9px;background:linear-gradient(#121212,#000);border-color:#303030;"></div>
<div class="btn " style="left:943.3px;top:115px;width:82.7px;height:22px;"></div>
<span class="bt " style="left:943.3px;width:82.7px;top:122px;font-size:9px;line-height:9px;">Sound</span>
<div class="btn dis" style="left:943.3px;top:162.13px;width:82.7px;height:22px;background:linear-gradient(#2e2e2e,#262626);border-color:#4a4a4a;"></div>
<span class="bt dis" style="left:943.3px;width:82.7px;top:169px;font-size:9px;line-height:9px;">Graphics</span>
<div class="btn dis" style="left:943.3px;top:209.26px;width:82.7px;height:22px;background:linear-gradient(#2e2e2e,#262626);border-color:#4a4a4a;"></div>
<span class="bt dis" style="left:943.3px;width:82.7px;top:216px;font-size:9px;line-height:9px;">Image</span>
<div class="btn dis" style="left:943.3px;top:256.39px;width:82.7px;height:22px;background:linear-gradient(#2e2e2e,#262626);border-color:#4a4a4a;"></div>
<span class="bt dis" style="left:943.3px;width:82.7px;top:263px;font-size:9px;line-height:9px;">Blur</span>
<div class="btn dis" style="left:943.3px;top:303.52px;width:82.7px;height:22px;background:linear-gradient(#2e2e2e,#262626);border-color:#4a4a4a;"></div>
<span class="bt dis" style="left:943.3px;width:82.7px;top:311px;font-size:9px;line-height:9px;">Displace</span>
<div class="btn dis" style="left:943.3px;top:350.65px;width:82.7px;height:22px;background:linear-gradient(#2e2e2e,#262626);border-color:#4a4a4a;"></div>
<span class="bt dis" style="left:943.3px;width:82.7px;top:358px;font-size:9px;line-height:9px;">Lens</span>
<div class="btn dis" style="left:943.3px;top:397.78px;width:82.7px;height:22px;background:linear-gradient(#2e2e2e,#262626);border-color:#4a4a4a;"></div>
<span class="bt dis" style="left:943.3px;width:82.7px;top:405px;font-size:9px;line-height:9px;">Webcams</span>
<div class="btn dis" style="left:943.3px;top:444.91px;width:82.7px;height:22px;background:linear-gradient(#2e2e2e,#262626);border-color:#4a4a4a;"></div>
<span class="bt dis" style="left:943.3px;width:82.7px;top:452px;font-size:9px;line-height:9px;">Horizontal</span>
<div class="btn dis" style="left:943.3px;top:492.04px;width:82.7px;height:22px;background:linear-gradient(#2e2e2e,#262626);border-color:#4a4a4a;"></div>
<span class="bt dis" style="left:943.3px;width:82.7px;top:499px;font-size:9px;line-height:9px;">Vertical</span>
<div class="btn dis" style="left:943.3px;top:539.17px;width:82.7px;height:22px;background:linear-gradient(#2e2e2e,#262626);border-color:#4a4a4a;"></div>
<span class="bt dis" style="left:943.3px;width:82.7px;top:546px;font-size:9px;line-height:9px;">All</span>
<div class="btn dis" style="left:943.3px;top:586.3px;width:82.7px;height:22px;background:linear-gradient(#2e2e2e,#262626);border-color:#4a4a4a;"></div>
<span class="bt dis" style="left:943.3px;width:82.7px;top:593px;font-size:9px;line-height:9px;">Favorites</span>
<div class="panel" style="left:1056.2px;top:89.5px;width:205.8px;height:564.3px;background:linear-gradient(#121212,#000);border-color:#303030;"></div>
<div style="left:1057px;top:91px;width:191px;height:562.5px;overflow:hidden;"><div style="left:-1057px;top:-91px;width:1248px;height:701px;">
<div class="cbd" style="left:1071px;top:107.1px;width:14px;height:12.9px;"></div>
<div class="btn " style="left:1095.5px;top:106px;width:100.5px;height:17px;"></div>
<span class="bt " style="left:1095.5px;width:100.5px;top:111px;font-size:9px;line-height:9px;">Bass line</span>
<div class="cbd" style="left:1071px;top:135.34px;width:14px;height:12.9px;"></div>
<div class="btn " style="left:1095.5px;top:134.24px;width:100.5px;height:17px;"></div>
<span class="bt " style="left:1095.5px;width:100.5px;top:139px;font-size:9px;line-height:9px;">Critters</span>
<div class="cbd" style="left:1071px;top:163.58px;width:14px;height:12.9px;"></div>
<div class="btn " style="left:1095.5px;top:162.48px;width:100.5px;height:17px;"></div>
<span class="bt " style="left:1095.5px;width:100.5px;top:167px;font-size:9px;line-height:9px;">Drops</span>
<div class="cbd" style="left:1071px;top:191.82px;width:14px;height:12.9px;"></div>
<div class="btn " style="left:1095.5px;top:190.72px;width:100.5px;height:17px;"></div>
<span class="bt " style="left:1095.5px;width:100.5px;top:195px;font-size:9px;line-height:9px;">Gum X</span>
<div class="cbd" style="left:1071px;top:220.06px;width:14px;height:12.9px;"></div>
<div class="btn " style="left:1095.5px;top:218.96px;width:100.5px;height:17px;"></div>
<span class="bt " style="left:1095.5px;width:100.5px;top:223px;font-size:9px;line-height:9px;">Gum Y</span>
<div class="cbd" style="left:1071px;top:248.3px;width:14px;height:12.9px;"></div>
<div class="btn " style="left:1095.5px;top:247.2px;width:100.5px;height:17px;"></div>
<span class="bt " style="left:1095.5px;width:100.5px;top:252px;font-size:9px;line-height:9px;">Image color beat</span>
<div class="cbd" style="left:1071px;top:276.54px;width:14px;height:12.9px;"></div>
<div class="btn " style="left:1095.5px;top:275.44px;width:100.5px;height:17px;"></div>
<span class="bt " style="left:1095.5px;width:100.5px;top:280px;font-size:9px;line-height:9px;">Images pulse</span>
<div class="cbd" style="left:1071px;top:304.78px;width:14px;height:12.9px;"></div>
<div class="btn " style="left:1095.5px;top:303.68px;width:100.5px;height:17px;"></div>
<span class="bt " style="left:1095.5px;width:100.5px;top:308px;font-size:9px;line-height:9px;">Oscillo horizontal</span>
<div class="cbd" style="left:1071px;top:333.02px;width:14px;height:12.9px;"></div>
<div class="btn " style="left:1095.5px;top:331.92px;width:100.5px;height:17px;"></div>
<span class="bt " style="left:1095.5px;width:100.5px;top:336px;font-size:9px;line-height:9px;">Oscillo polar</span>
<div class="cbd" style="left:1071px;top:361.26px;width:14px;height:12.9px;"></div>
<div class="btn " style="left:1095.5px;top:360.16px;width:100.5px;height:17px;"></div>
<span class="bt " style="left:1095.5px;width:100.5px;top:365px;font-size:9px;line-height:9px;">Oscillo rotating</span>
<div class="cbd" style="left:1071px;top:389.5px;width:14px;height:12.9px;"></div>
<div class="btn " style="left:1095.5px;top:388.4px;width:100.5px;height:17px;"></div>
<span class="bt " style="left:1095.5px;width:100.5px;top:393px;font-size:9px;line-height:9px;">Oscillo vertical</span>
<div class="cbd" style="left:1071px;top:417.74px;width:14px;height:12.9px;"></div>
<div class="btn " style="left:1095.5px;top:416.64px;width:100.5px;height:17px;"></div>
<span class="bt " style="left:1095.5px;width:100.5px;top:421px;font-size:9px;line-height:9px;">Path</span>
<div class="cbd" style="left:1071px;top:445.98px;width:14px;height:12.9px;"></div>
<div class="btn " style="left:1095.5px;top:444.88px;width:100.5px;height:17px;"></div>
<span class="bt " style="left:1095.5px;width:100.5px;top:449px;font-size:9px;line-height:9px;">Path freq</span>
<div class="cbd" style="left:1071px;top:474.22px;width:14px;height:12.9px;"></div>
<div class="btn " style="left:1095.5px;top:473.12px;width:100.5px;height:17px;"></div>
<span class="bt " style="left:1095.5px;width:100.5px;top:478px;font-size:9px;line-height:9px;">Path oscillo</span>
<div class="cbd" style="left:1071px;top:502.46px;width:14px;height:12.9px;"></div>
<div class="btn " style="left:1095.5px;top:501.36px;width:100.5px;height:17px;"></div>
<span class="bt " style="left:1095.5px;width:100.5px;top:506px;font-size:9px;line-height:9px;">Path oscillo freq</span>
<div class="cbd" style="left:1071px;top:530.7px;width:14px;height:12.9px;"></div>
<div class="btn " style="left:1095.5px;top:529.6px;width:100.5px;height:17px;"></div>
<span class="bt " style="left:1095.5px;width:100.5px;top:534px;font-size:9px;line-height:9px;">Pulse</span>
<div class="cbd" style="left:1071px;top:558.94px;width:14px;height:12.9px;"></div>
<div class="btn " style="left:1095.5px;top:557.84px;width:100.5px;height:17px;"></div>
<span class="bt " style="left:1095.5px;width:100.5px;top:562px;font-size:9px;line-height:9px;">Recurrence plot</span>
<div class="cbd" style="left:1071px;top:587.18px;width:14px;height:12.9px;"></div>
<div class="btn " style="left:1095.5px;top:586.08px;width:100.5px;height:17px;"></div>
<span class="bt " style="left:1095.5px;width:100.5px;top:591px;font-size:9px;line-height:9px;">Rotors freq</span>
<div class="cbd" style="left:1071px;top:615.42px;width:14px;height:12.9px;"></div>
<div class="btn " style="left:1095.5px;top:614.32px;width:100.5px;height:17px;"></div>
<span class="bt " style="left:1095.5px;width:100.5px;top:619px;font-size:9px;line-height:9px;">Shaker X</span>
<div class="cbd" style="left:1071px;top:643.66px;width:14px;height:12.9px;"></div>
<div class="btn " style="left:1095.5px;top:642.56px;width:100.5px;height:17px;"></div>
<span class="bt " style="left:1095.5px;width:100.5px;top:647px;font-size:9px;line-height:9px;">Shaker Y</span>
</div></div>
<div class="" style="left:1238.5px;top:90.5px;width:9.5px;height:562.5px;background:#181818;border-right:1px solid #262626;"></div>
<div class="" style="left:1240.9px;top:92px;width:4.4px;height:311px;background:#3a3a3a;border-radius:2px;"></div>
<div class="panel" style="left:1px;top:663px;width:1246.5px;height:29.6px;background:linear-gradient(#121212,#0a0a0a);border-color:#2e2e2e;"></div>
<span style="left:323.7px;top:674px;width:600px;text-align:center;font-size:9px;line-height:9px;font-weight:normal;color:#9a9a9a;white-space:nowrap;letter-spacing:-0.05px;">Le Biniou 3.60.1 | ©1994-2021 Olivier «<b style="color:#bbb;text-decoration:underline">oliv3</b>» Girondel | Powered by <b style="color:#bbb;text-decoration:underline">Ulfius</b> 2.7.3 | Icons by <b style="color:#bbb;text-decoration:underline">Icons8</b></span>
</body></html>
